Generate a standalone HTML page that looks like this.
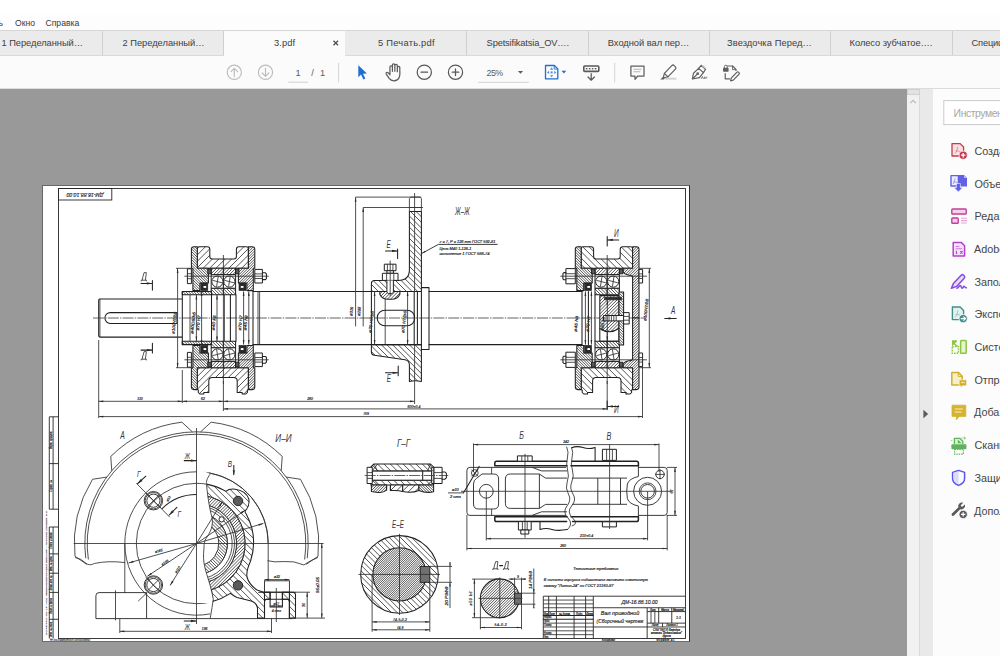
<!DOCTYPE html>
<html lang="ru">
<head>
<meta charset="utf-8">
<title>3.pdf - Adobe Acrobat</title>
<style>
html,body{margin:0;padding:0;}
body{width:1000px;height:656px;overflow:hidden;position:relative;background:#fff;font-family:"Liberation Sans",sans-serif;color:#444;}
.abs{position:absolute;}
#menubar{left:0;top:15px;width:1000px;height:15px;background:#fdfdfd;}
#menubar span{position:absolute;top:1.8px;font-size:8.6px;line-height:12px;color:#3a3a3a;white-space:nowrap;}
#tabbar{left:0;top:30px;width:1000px;height:26px;background:#ebebeb;border-top:1px solid #d6d6d6;border-bottom:1px solid #d9d9d9;box-sizing:border-box;}
.tab{position:absolute;top:0;height:24px;box-sizing:border-box;border-right:1px solid #cfcfcf;font-size:9.3px;line-height:24px;color:#404040;text-align:left;white-space:nowrap;overflow:hidden;}
.tt{position:absolute;top:0;white-space:nowrap;}
.tab.act{background:#fbfbfb;height:25px;border-right:none;}
#toolbar{left:0;top:56px;width:1000px;height:33px;background:#fbfbfb;border-bottom:1px solid #dcdcdc;box-sizing:border-box;}
#docbg{left:0;top:89px;width:907px;height:567px;background:#999999;}
#vscroll{left:907px;top:89px;width:13px;height:567px;background:#f1f1f1;border-right:1px solid #dadada;box-sizing:border-box;}
#split{left:920px;top:89px;width:13px;height:567px;background:#e9e9e9;}
#rpanel{left:933px;top:89px;width:67px;height:567px;background:#fcfcfc;}
.tool{position:absolute;left:41px;font-size:10.6px;line-height:14px;color:#484848;white-space:nowrap;}
#page{left:42px;top:185px;width:648px;height:457px;background:#fff;box-sizing:border-box;border-left:1px solid #666;border-top:1px solid #666;border-right:1px solid #2a2a2a;border-bottom:1px solid #6e6e6e;}
svg{position:absolute;left:0;top:0;overflow:visible;}
</style>
</head>
<body>
<div class="abs" id="menubar">
  <span style="left:-1.5px">ь</span>
  <span style="left:15px">Окно</span>
  <span style="left:45.5px">Справка</span>
</div>
<div class="abs" id="tabbar">
  <div class="tab" style="left:-19.5px;width:122.0px"><span class="tt" style="left:21.0px;letter-spacing:-0.040px">1 Переделанный…</span></div>
  <div class="tab" style="left:102.5px;width:121.5px"><span class="tt" style="left:20.0px;letter-spacing:-0.007px">2 Переделанный…</span></div>
  <div class="tab act" style="left:224px;width:121px"><span class="tt" style="left:50px;letter-spacing:0.1px">3.pdf</span></div>
  <div class="tab" style="left:345px;width:122px"><span class="tt" style="left:33.0px;letter-spacing:0.255px">5 Печать.pdf</span></div>
  <div class="tab" style="left:467px;width:122px"><span class="tt" style="left:19.6px;letter-spacing:-0.153px">Spetsifikatsia_OV….</span></div>
  <div class="tab" style="left:589px;width:121px"><span class="tt" style="left:18.8px;letter-spacing:-0.020px">Входной вал пер…</span></div>
  <div class="tab" style="left:710px;width:121px"><span class="tt" style="left:17.0px;letter-spacing:0.095px">Звездочка Перед…</span></div>
  <div class="tab" style="left:831px;width:122px"><span class="tt" style="left:18.6px;letter-spacing:-0.049px">Колесо зубчатое….</span></div>
  <div class="tab" style="left:953px;width:122px"><span class="tt" style="left:18.6px;letter-spacing:-0.200px">Спецификация…</span></div>
</div>
<div class="abs" id="toolbar"></div>
<div class="abs" id="docbg"></div>
<div class="abs" id="vscroll"></div>
<div class="abs" id="split"></div>
<div class="abs" id="rpanel"></div>
<div class="abs" id="page"></div>
<!--CHROME-START-->
<svg id="chrome" width="1000" height="656" viewBox="0 0 1000 656" font-family="Liberation Sans, sans-serif">
<path id="tabclose" d="M333.5 40.7L338 45.2M338 40.7L333.5 45.2" stroke="#4d4d4d" stroke-width="1.25" fill="none"/>
<!-- toolbar: page nav -->
<g fill="none" stroke="#bdbdbd" stroke-width="1.2" stroke-linecap="round" stroke-linejoin="round">
  <circle cx="234.3" cy="72.3" r="7.1"/>
  <path d="M234.3 76.3V68.6M231 71.6l3.3-3.3 3.3 3.3"/>
  <circle cx="265.5" cy="72.3" r="7.1"/>
  <path d="M265.5 68.3V76M262.2 73l3.3 3.3 3.3-3.3"/>
</g>
<text x="298" y="75.6" font-size="9.2" fill="#5a5a5a" text-anchor="middle">1</text>
<path d="M288.3 82.2H307.8" stroke="#cfcfcf" stroke-width="1"/>
<text x="311.3" y="75.6" font-size="9.2" fill="#5a5a5a">/</text>
<text x="320" y="75.6" font-size="9.2" fill="#5a5a5a">1</text>
<path d="M338.6 62.8V82.3M614.7 62.8V82.3" stroke="#d4d4d4" stroke-width="1"/>
<!-- select arrow -->
<path d="M358.3 65.2L358.3 77.2L361 74.6L363.4 79.4L365.3 78.5L363 73.8L366.9 73.6Z" fill="#1e6fd0"/>
<!-- hand -->
<g fill="none" stroke="#595959" stroke-width="1.1" stroke-linecap="round" stroke-linejoin="round" transform="translate(393.3 72.6) scale(1.12) translate(-392.3 -72.6)">
  <path d="M389.3 73.5V67.6a1.1 1.1 0 0 1 2.2 0V71.5M391.5 71.5V66a1.1 1.1 0 0 1 2.2 0V71.5M393.7 71.5V66.4a1.1 1.1 0 0 1 2.2 0V71.8M395.9 71.8V68.2a1.1 1.1 0 0 1 2.2 0V71.8M398.1 70.5c0 2.5 0.6 4.2-0.6 6.6-0.9 1.9-2.3 2.8-4.6 2.8-2.2 0-3.2-0.6-4.3-2.1l-2.6-3.9c-0.6-1.1 0.7-2 1.7-1.1l1.7 1.7"/>
</g>
<!-- zoom out / in -->
<g fill="none" stroke="#585858" stroke-width="1.25" stroke-linecap="round">
  <circle cx="424.3" cy="72.2" r="7.1"/>
  <path d="M421 72.2H427.6"/>
  <circle cx="455.5" cy="72.2" r="7.1"/>
  <path d="M452.2 72.2H458.8M455.5 68.9V75.5"/>
</g>
<text x="486.6" y="75.5" font-size="8.8" fill="#5a5a5a" letter-spacing="-0.55">25%</text>
<path d="M517.9 70.9H523.1L520.5 73.8Z" fill="#5a5a5a"/>
<path d="M478 82.3H528.8" stroke="#d2d2d2" stroke-width="1"/>
<!-- fit page -->
<g fill="none" stroke="#1e6fd0" stroke-width="1.3" stroke-linejoin="round">
  <path d="M545.5 65.5H554.4L557.8 68.9V78.8H545.5Z"/>
  <path d="M554.2 65.6V69.1H557.7" stroke-width="0.9"/>
</g>
<g fill="#4a8fe0">
  <path d="M551.6 67.6l1.7 2.1h-3.4zM551.6 77.3l1.7-2.1h-3.4zM547 72.4l2.1-1.7v3.4zM556.3 72.4l-2.1-1.7v3.4z"/>
  <rect x="550.6" y="71.4" width="2" height="2"/>
</g>
<path d="M561.5 70.8H566.3L563.9 73.5Z" fill="#1e6fd0"/>
<!-- keyboard/scroll down -->
<g fill="none" stroke="#5a5a5a" stroke-width="1.25" stroke-linecap="round" stroke-linejoin="round">
  <rect x="583.8" y="66" width="15" height="5.4" rx="0.9" stroke-width="1.6"/>
  <path d="M591.2 73.6V80M588 77l3.2 3.2 3.2-3.2"/>
</g>
<g fill="#5a5a5a"><rect x="585.8" y="68" width="1.6" height="1.4"/><rect x="588.8" y="68" width="1.6" height="1.4"/><rect x="591.8" y="68" width="1.6" height="1.4"/><rect x="594.8" y="68" width="1.6" height="1.4"/></g>
<!-- comment -->
<g fill="none" stroke="#5f5f5f" stroke-width="1.25" stroke-linejoin="round">
  <path d="M630.9 66H644V76H637.8L635 79.3V76H630.9Z"/>
</g>
<path d="M633.4 69.3H641.6M633.4 71.8H640.4" stroke="#b5b5b5" stroke-width="1.1"/>
<!-- highlighter -->
<g fill="none" stroke="#5f5f5f" stroke-width="1.2" stroke-linejoin="round" stroke-linecap="round">
  <path d="M664.4 73.4L671.8 65.6a1.7 1.7 0 0 1 2.4 0l1.2 1.2a1.7 1.7 0 0 1 0 2.4L667.9 76.9Z"/>
  <path d="M664.4 73.4L663.2 78L667.9 76.9"/>
</g>
<path d="M660.2 79.4l3-2.6 1.6 1.6-1.2 1z" fill="#5f5f5f"/>
<path d="M665 78.7H676.4" stroke="#d0d0d0" stroke-width="1.8"/>
<!-- sign pen -->
<g fill="none" stroke="#5f5f5f" stroke-width="1.2" stroke-linejoin="round" stroke-linecap="round">
  <path d="M692.3 79L693.5 73.2L698.6 68.4L703.4 72.6L699.4 77.6Z"/>
  <path d="M692.6 78.7L697.3 74.1"/>
  <path d="M698.6 68.4L701.2 65.3L705.5 69.2L703.4 72.6"/>
  <circle cx="697.7" cy="73.7" r="0.8"/>
</g>
<path d="M701.4 65.5l2 -0.2 2.2 2.2-0.2 1.6z" fill="#cfcfcf"/>
<path d="M701.2 78.9l1.2-2.4 1.1 2.4M704.6 78.9v-2.3M705.8 78.9v-1.6l1.5 0" fill="none" stroke="#5f5f5f" stroke-width="0.8"/>
<!-- doc + pen -->
<g fill="none" stroke="#5f5f5f" stroke-width="1.2" stroke-linejoin="round" stroke-linecap="round">
  <path d="M727.5 66H732.6L736 69.4V70.5M725.2 73.5V78.8H729.6"/>
  <path d="M732.5 66.2V69.6H735.8" stroke-width="0.9"/>
  <path d="M731.2 78.2L737 72.2a1 1 0 0 1 1.5 0l0.6 0.6a1 1 0 0 1 0 1.4L733.3 80.2L730.6 80.8Z"/>
</g>
<rect x="723" y="67.8" width="5.6" height="4" rx="0.8" fill="#5f5f5f"/>
<path d="M724.4 68V66.6a1.4 1.4 0 0 1 2.8 0V68" fill="none" stroke="#5f5f5f" stroke-width="0.9"/>

<!-- scrollbar pieces -->
<rect x="907.5" y="89.5" width="12" height="5" fill="#e2e2e2" stroke="#cfcfcf" stroke-width="1"/>
<path d="M910.3 103.2L913.1 100.4L915.9 103.2" fill="none" stroke="#b9b9b9" stroke-width="1.2"/>
<path d="M923.4 409.8V418.2L928.2 414Z" fill="#5c5c5c"/>
<!-- search -->
<rect x="943.8" y="100.6" width="70" height="24" fill="#fff" stroke="#cbcbcb" stroke-width="1"/>
<text x="953.6" y="117" font-size="10.4" fill="#a6a6a6" letter-spacing="-0.42">Инструмент</text>
<g font-size="10.8" fill="#464646">
  <text x="974.4" y="154.8">Создать</text>
  <text x="974.4" y="187.5">Объединить</text>
  <text x="974.6" y="220.2">Редактиро</text>
  <text x="974" y="252.9">Adobe Sign</text>
  <text x="974.4" y="285.6">Заполнить</text>
  <text x="974.6" y="318.3">Экспорт</text>
  <text x="974.4" y="351">Системати</text>
  <text x="974.4" y="383.7">Отправить</text>
  <text x="974" y="416.4">Добавить</text>
  <text x="974.4" y="449.1">Сканирова</text>
  <text x="974.4" y="481.8">Защита</text>
  <text x="974" y="514.5">Дополнит</text>
</g>
<!-- 1 create pdf -->
<g>
  <path d="M952 143.6H960.2L963.6 147V156H952Z" fill="#f7dfe2" stroke="#c8394c" stroke-width="1.3" stroke-linejoin="round"/>
  <path d="M955 153.2c1.6-1.4 2.4-3.4 2.6-6.4M955.6 150.8c1.8-0.2 3.6 0.4 5.2 1.6" fill="none" stroke="#d9808c" stroke-width="0.8"/>
  <circle cx="963.2" cy="155.2" r="4.1" fill="#c8394c" stroke="#fcfcfc" stroke-width="0.8"/>
  <path d="M961 155.2H965.4M963.2 153V157.4" stroke="#fff" stroke-width="1.3"/>
</g>
<!-- 2 combine -->
<g>
  <path d="M958.5 175H964L967 178V186.5H958.5Z" fill="#6161e6"/>
  <path d="M964 175V178H967Z" fill="#b9b9f5"/>
  <path d="M951 175.6H958.4V186H951Z" fill="#eeeefc" stroke="#6161e6" stroke-width="1.4" stroke-linejoin="round"/>
  <path d="M953 184c1.2-1.2 1.8-3 2-5.6M953.4 181.8c1.4-0.2 2.8 0.3 4 1.3" fill="none" stroke="#8a8aea" stroke-width="0.8"/>
  <path d="M956.4 183.5H960.4V187.5H962.8L958.4 192L954 187.5H956.4Z" fill="#6161e6" stroke="#fcfcfc" stroke-width="0.6"/>
</g>
<!-- 3 edit pdf -->
<g>
  <rect x="951.8" y="209" width="14.4" height="5" rx="0.8" fill="#f3d3ea" stroke="#c43e99" stroke-width="1.4"/>
  <rect x="951.8" y="218" width="6.4" height="5.2" rx="0.8" fill="#f3d3ea" stroke="#c43e99" stroke-width="1.4"/>
  <path d="M961 218.2H966.8M961 220.6H966.8M961 223H966.8" stroke="#e3a2d0" stroke-width="1.1"/>
</g>
<!-- 4 adobe sign -->
<g>
  <path d="M953.2 242.4H961.2L964.6 245.8V256H953.2Z" fill="#f5e3fa" stroke="#b341cf" stroke-width="1.5" stroke-linejoin="round"/>
  <path d="M955.6 246.4H959.4M955.6 248.8H962.2" stroke="#c77adb" stroke-width="1"/>
  <path d="M956.4 250.8v2.4l0.6 0.8M960.2 251l2.4 2.6M962.6 251l-2.4 2.6" fill="none" stroke="#b341cf" stroke-width="1.1"/>
</g>
<!-- 5 fill sign -->
<g fill="none" stroke="#864be0" stroke-width="1.5" stroke-linejoin="round" stroke-linecap="round">
  <path d="M951.4 288.2L953.4 283.6L961.2 275.2a1.7 1.7 0 0 1 2.4 0l0.6 0.6a1.7 1.7 0 0 1 0 2.4L956.6 286.4L951.4 288.2Z" fill="#e6dcf8"/>
  <path d="M956.8 288.2c1.6 0 2.6-2.8 3.6-2.8s0.4 2.8 1.6 2.8 1.2-2 2-2 0.8 1.8 2.4 1.6"/>
</g>
<!-- 6 export pdf -->
<g>
  <path d="M952.4 307H960.2L963.6 310.4V319.6H952.4Z" fill="#e4f0ef" stroke="#428f89" stroke-width="1.4" stroke-linejoin="round"/>
  <path d="M955.2 316.8c1.6-1.4 2.4-3.4 2.6-6.4M955.8 314.4c1.8-0.2 3.6 0.4 5.2 1.6" fill="none" stroke="#88bcb8" stroke-width="0.8"/>
  <circle cx="963.2" cy="318.6" r="4.2" fill="#428f89" stroke="#fcfcfc" stroke-width="0.8"/>
  <path d="M960.8 318.6H964.6M963.4 316.6L965.6 318.6L963.4 320.6" fill="none" stroke="#fff" stroke-width="1.2"/>
</g>
<!-- 7 organize -->
<g>
  <rect x="960.6" y="340.4" width="5.6" height="12.8" rx="0.8" fill="#e6f3d4" stroke="#8cc540" stroke-width="1.5"/>
  <rect x="952.2" y="346.6" width="6.2" height="6.6" fill="none" stroke="#8cc540" stroke-width="1.4" stroke-dasharray="1.6 1"/>
  <path d="M952 340.2H957V341.6L954.8 343.4L958.2 346L957 347L954 344.4L952 346Z" fill="#8cc540"/>
</g>
<!-- 8 send for review -->
<g>
  <path d="M951.8 372.4H958.4L962.2 376.2V385H951.8Z" fill="#f6eec6" stroke="#d1b12c" stroke-width="1.5" stroke-linejoin="round"/>
  <path d="M958.2 372.6V376.4H962" fill="none" stroke="#d1b12c" stroke-width="1"/>
  <path d="M959.2 379.8H966.6V385.8H962.4L960.6 387.8V385.8H959.2Z" fill="#d1b12c" stroke="#fcfcfc" stroke-width="0.6"/>
  <path d="M961 382.6H964.8" stroke="#f6eec6" stroke-width="1"/>
</g>
<!-- 9 comment -->
<g>
  <path d="M952 405.2H965.8V416.4H959.2L956.4 419.8V416.4H952Z" fill="#d3b331" stroke="#d3b331" stroke-width="0.8" stroke-linejoin="round"/>
  <path d="M954.8 409H962.8M954.8 412H961.6" stroke="#f8efc4" stroke-width="1.2"/>
</g>
<!-- 10 scan -->
<g>
  <path d="M954.4 444V438.4H960L962.8 441.2V444" fill="#dff0dd" stroke="#5fb45b" stroke-width="1.3" stroke-linejoin="round"/>
  <path d="M957.8 439.4V443.2H961.6Z" fill="#5fb45b"/>
  <rect x="951.4" y="444.2" width="15" height="5" rx="1" fill="#5fb45b"/>
  <rect x="954.6" y="449.4" width="8.8" height="4.8" fill="none" stroke="#5fb45b" stroke-width="1.2" stroke-dasharray="1.4 1"/>
  <path d="M964.6 436.6v3M963.1 438.1h3M962 437.2v1.4" stroke="#7cc878" stroke-width="0.8"/>
  <path d="M950.8 440.4h1.6" stroke="#7cc878" stroke-width="0.8"/>
</g>
<!-- 11 protect -->
<g>
  <path d="M958.6 470.4L964.6 472.4V478.4C964.6 481.6 962 484 958.6 485.4C955.2 484 952.6 481.6 952.6 478.4V472.4Z" fill="#fcfcfc" stroke="#5656ee" stroke-width="1.5" stroke-linejoin="round"/>
  <path d="M958.6 471.4L953.6 473.1V478.4C953.6 481 955.8 483 958.6 484.3Z" fill="#dcdcfa"/>
</g>
<!-- 12 more tools -->
<g>
  <path d="M952 513.6L958.4 507.2a3.6 3.6 0 0 1 4.8-4.4L960.6 505.4L962 507L964.8 504.6a3.6 3.6 0 0 1-4.6 4.6L954 515.6a1.4 1.4 0 0 1-2-2Z" fill="#5a5a5a"/>
  <circle cx="963.2" cy="514.4" r="4.2" fill="#5a5a5a" stroke="#fcfcfc" stroke-width="0.8"/>
  <path d="M961 514.4H965.4M963.2 512.2V516.6" stroke="#fff" stroke-width="1.3"/>
</g>

</svg>

<!--CHROME-END-->
<!--DRAW-START-->
<svg id="drawing" width="1000" height="656" viewBox="0 0 1000 656" font-family="Liberation Sans, sans-serif">
<defs><path id="L1" d="M-401 642l456 -456M-394.6 642l456 -456M-388.2 642l456 -456M-381.8 642l456 -456M-375.4 642l456 -456M-369 642l456 -456M-362.6 642l456 -456M-356.2 642l456 -456M-349.8 642l456 -456M-343.4 642l456 -456M-337 642l456 -456M-330.6 642l456 -456M-324.2 642l456 -456M-317.8 642l456 -456M-311.4 642l456 -456M-305 642l456 -456M-298.6 642l456 -456M-292.2 642l456 -456M-285.8 642l456 -456M-279.4 642l456 -456M-273 642l456 -456M-266.6 642l456 -456M-260.2 642l456 -456M-253.8 642l456 -456M-247.4 642l456 -456M-241 642l456 -456M-234.6 642l456 -456M-228.2 642l456 -456M-221.8 642l456 -456M-215.4 642l456 -456M-209 642l456 -456M-202.6 642l456 -456M-196.2 642l456 -456M-189.8 642l456 -456M-183.4 642l456 -456M-177 642l456 -456M-170.6 642l456 -456M-164.2 642l456 -456M-157.8 642l456 -456M-151.4 642l456 -456M-145 642l456 -456M-138.6 642l456 -456M-132.2 642l456 -456M-125.8 642l456 -456M-119.4 642l456 -456M-113 642l456 -456M-106.6 642l456 -456M-100.2 642l456 -456M-93.8 642l456 -456M-87.4 642l456 -456M-81 642l456 -456M-74.6 642l456 -456M-68.2 642l456 -456M-61.8 642l456 -456M-55.4 642l456 -456M-49 642l456 -456M-42.6 642l456 -456M-36.2 642l456 -456M-29.8 642l456 -456M-23.4 642l456 -456M-17 642l456 -456M-10.6 642l456 -456M-4.2 642l456 -456M2.2 642l456 -456M8.6 642l456 -456M15 642l456 -456M21.4 642l456 -456M27.8 642l456 -456M34.2 642l456 -456M40.6 642l456 -456M47 642l456 -456M53.4 642l456 -456M59.8 642l456 -456M66.2 642l456 -456M72.6 642l456 -456M79 642l456 -456M85.4 642l456 -456M91.8 642l456 -456M98.2 642l456 -456M104.6 642l456 -456M111 642l456 -456M117.4 642l456 -456M123.8 642l456 -456M130.2 642l456 -456M136.6 642l456 -456M143 642l456 -456M149.4 642l456 -456M155.8 642l456 -456M162.2 642l456 -456M168.6 642l456 -456M175 642l456 -456M181.4 642l456 -456M187.8 642l456 -456M194.2 642l456 -456M200.6 642l456 -456M207 642l456 -456M213.4 642l456 -456M219.8 642l456 -456M226.2 642l456 -456M232.6 642l456 -456M239 642l456 -456M245.4 642l456 -456M251.8 642l456 -456M258.2 642l456 -456M264.6 642l456 -456M271 642l456 -456M277.4 642l456 -456M283.8 642l456 -456M290.2 642l456 -456M296.6 642l456 -456M303 642l456 -456M309.4 642l456 -456M315.8 642l456 -456M322.2 642l456 -456M328.6 642l456 -456M335 642l456 -456M341.4 642l456 -456M347.8 642l456 -456M354.2 642l456 -456M360.6 642l456 -456M367 642l456 -456M373.4 642l456 -456M379.8 642l456 -456M386.2 642l456 -456M392.6 642l456 -456M399 642l456 -456M405.4 642l456 -456M411.8 642l456 -456M418.2 642l456 -456M424.6 642l456 -456M431 642l456 -456M437.4 642l456 -456M443.8 642l456 -456M450.2 642l456 -456M456.6 642l456 -456M463 642l456 -456M469.4 642l456 -456M475.8 642l456 -456M482.2 642l456 -456M488.6 642l456 -456M495 642l456 -456M501.4 642l456 -456M507.8 642l456 -456M514.2 642l456 -456M520.6 642l456 -456M527 642l456 -456M533.4 642l456 -456M539.8 642l456 -456M546.2 642l456 -456M552.6 642l456 -456M559 642l456 -456M565.4 642l456 -456M571.8 642l456 -456M578.2 642l456 -456M584.6 642l456 -456M591 642l456 -456M597.4 642l456 -456M603.8 642l456 -456M610.2 642l456 -456M616.6 642l456 -456M623 642l456 -456M629.4 642l456 -456M635.8 642l456 -456M642.2 642l456 -456M648.6 642l456 -456M655 642l456 -456M661.4 642l456 -456M667.8 642l456 -456M674.2 642l456 -456M680.6 642l456 -456M687 642l456 -456M693.4 642l456 -456M699.8 642l456 -456M706.2 642l456 -456M712.6 642l456 -456M719 642l456 -456M725.4 642l456 -456M731.8 642l456 -456M738.2 642l456 -456M744.6 642l456 -456M751 642l456 -456M757.4 642l456 -456M763.8 642l456 -456M770.2 642l456 -456M776.6 642l456 -456M783 642l456 -456M789.4 642l456 -456M795.8 642l456 -456M802.2 642l456 -456M808.6 642l456 -456M815 642l456 -456M821.4 642l456 -456M827.8 642l456 -456M834.2 642l456 -456M840.6 642l456 -456M847 642l456 -456M853.4 642l456 -456M859.8 642l456 -456M866.2 642l456 -456M872.6 642l456 -456M879 642l456 -456M885.4 642l456 -456M891.8 642l456 -456M898.2 642l456 -456M904.6 642l456 -456M911 642l456 -456M917.4 642l456 -456M923.8 642l456 -456M930.2 642l456 -456M936.6 642l456 -456M943 642l456 -456M949.4 642l456 -456M955.8 642l456 -456M962.2 642l456 -456M968.6 642l456 -456M975 642l456 -456M981.4 642l456 -456M987.8 642l456 -456M994.2 642l456 -456M1000.6 642l456 -456M1007 642l456 -456M1013.4 642l456 -456M1019.8 642l456 -456M1026.2 642l456 -456M1032.6 642l456 -456M1039 642l456 -456M1045.4 642l456 -456M1051.8 642l456 -456M1058.2 642l456 -456M1064.6 642l456 -456M1071 642l456 -456M1077.4 642l456 -456M1083.8 642l456 -456M1090.2 642l456 -456M1096.6 642l456 -456M1103 642l456 -456M1109.4 642l456 -456M1115.8 642l456 -456M1122.2 642l456 -456M1128.6 642l456 -456M1135 642l456 -456M1141.4 642l456 -456" fill="none" stroke="#2a2a2a" stroke-width="0.8"/>
<path id="L2" d="M-399.7 186l456 456M-393.3 186l456 456M-386.9 186l456 456M-380.5 186l456 456M-374.1 186l456 456M-367.7 186l456 456M-361.3 186l456 456M-354.9 186l456 456M-348.5 186l456 456M-342.1 186l456 456M-335.7 186l456 456M-329.3 186l456 456M-322.9 186l456 456M-316.5 186l456 456M-310.1 186l456 456M-303.7 186l456 456M-297.3 186l456 456M-290.9 186l456 456M-284.5 186l456 456M-278.1 186l456 456M-271.7 186l456 456M-265.3 186l456 456M-258.9 186l456 456M-252.5 186l456 456M-246.1 186l456 456M-239.7 186l456 456M-233.3 186l456 456M-226.9 186l456 456M-220.5 186l456 456M-214.1 186l456 456M-207.7 186l456 456M-201.3 186l456 456M-194.9 186l456 456M-188.5 186l456 456M-182.1 186l456 456M-175.7 186l456 456M-169.3 186l456 456M-162.9 186l456 456M-156.5 186l456 456M-150.1 186l456 456M-143.7 186l456 456M-137.3 186l456 456M-130.9 186l456 456M-124.5 186l456 456M-118.1 186l456 456M-111.7 186l456 456M-105.3 186l456 456M-98.9 186l456 456M-92.5 186l456 456M-86.1 186l456 456M-79.7 186l456 456M-73.3 186l456 456M-66.9 186l456 456M-60.5 186l456 456M-54.1 186l456 456M-47.7 186l456 456M-41.3 186l456 456M-34.9 186l456 456M-28.5 186l456 456M-22.1 186l456 456M-15.7 186l456 456M-9.3 186l456 456M-2.9 186l456 456M3.5 186l456 456M9.9 186l456 456M16.3 186l456 456M22.7 186l456 456M29.1 186l456 456M35.5 186l456 456M41.9 186l456 456M48.3 186l456 456M54.7 186l456 456M61.1 186l456 456M67.5 186l456 456M73.9 186l456 456M80.3 186l456 456M86.7 186l456 456M93.1 186l456 456M99.5 186l456 456M105.9 186l456 456M112.3 186l456 456M118.7 186l456 456M125.1 186l456 456M131.5 186l456 456M137.9 186l456 456M144.3 186l456 456M150.7 186l456 456M157.1 186l456 456M163.5 186l456 456M169.9 186l456 456M176.3 186l456 456M182.7 186l456 456M189.1 186l456 456M195.5 186l456 456M201.9 186l456 456M208.3 186l456 456M214.7 186l456 456M221.1 186l456 456M227.5 186l456 456M233.9 186l456 456M240.3 186l456 456M246.7 186l456 456M253.1 186l456 456M259.5 186l456 456M265.9 186l456 456M272.3 186l456 456M278.7 186l456 456M285.1 186l456 456M291.5 186l456 456M297.9 186l456 456M304.3 186l456 456M310.7 186l456 456M317.1 186l456 456M323.5 186l456 456M329.9 186l456 456M336.3 186l456 456M342.7 186l456 456M349.1 186l456 456M355.5 186l456 456M361.9 186l456 456M368.3 186l456 456M374.7 186l456 456M381.1 186l456 456M387.5 186l456 456M393.9 186l456 456M400.3 186l456 456M406.7 186l456 456M413.1 186l456 456M419.5 186l456 456M425.9 186l456 456M432.3 186l456 456M438.7 186l456 456M445.1 186l456 456M451.5 186l456 456M457.9 186l456 456M464.3 186l456 456M470.7 186l456 456M477.1 186l456 456M483.5 186l456 456M489.9 186l456 456M496.3 186l456 456M502.7 186l456 456M509.1 186l456 456M515.5 186l456 456M521.9 186l456 456M528.3 186l456 456M534.7 186l456 456M541.1 186l456 456M547.5 186l456 456M553.9 186l456 456M560.3 186l456 456M566.7 186l456 456M573.1 186l456 456M579.5 186l456 456M585.9 186l456 456M592.3 186l456 456M598.7 186l456 456M605.1 186l456 456M611.5 186l456 456M617.9 186l456 456M624.3 186l456 456M630.7 186l456 456M637.1 186l456 456M643.5 186l456 456M649.9 186l456 456M656.3 186l456 456M662.7 186l456 456M669.1 186l456 456M675.5 186l456 456M681.9 186l456 456M688.3 186l456 456M694.7 186l456 456M701.1 186l456 456M707.5 186l456 456M713.9 186l456 456M720.3 186l456 456M726.7 186l456 456M733.1 186l456 456M739.5 186l456 456M745.9 186l456 456M752.3 186l456 456M758.7 186l456 456M765.1 186l456 456M771.5 186l456 456M777.9 186l456 456M784.3 186l456 456M790.7 186l456 456M797.1 186l456 456M803.5 186l456 456M809.9 186l456 456M816.3 186l456 456M822.7 186l456 456M829.1 186l456 456M835.5 186l456 456M841.9 186l456 456M848.3 186l456 456M854.7 186l456 456M861.1 186l456 456M867.5 186l456 456M873.9 186l456 456M880.3 186l456 456M886.7 186l456 456M893.1 186l456 456M899.5 186l456 456M905.9 186l456 456M912.3 186l456 456M918.7 186l456 456M925.1 186l456 456M931.5 186l456 456M937.9 186l456 456M944.3 186l456 456M950.7 186l456 456M957.1 186l456 456M963.5 186l456 456M969.9 186l456 456M976.3 186l456 456M982.7 186l456 456M989.1 186l456 456M995.5 186l456 456M1001.9 186l456 456M1008.3 186l456 456M1014.7 186l456 456M1021.1 186l456 456M1027.5 186l456 456M1033.9 186l456 456M1040.3 186l456 456M1046.7 186l456 456M1053.1 186l456 456M1059.5 186l456 456M1065.9 186l456 456M1072.3 186l456 456M1078.7 186l456 456M1085.1 186l456 456M1091.5 186l456 456M1097.9 186l456 456M1104.3 186l456 456M1110.7 186l456 456M1117.1 186l456 456M1123.5 186l456 456M1129.9 186l456 456M1136.3 186l456 456M1142.7 186l456 456" fill="none" stroke="#2a2a2a" stroke-width="0.8"/>
<path id="L1f" d="M-401 642l456 -456M-398.3 642l456 -456M-395.6 642l456 -456M-392.9 642l456 -456M-390.2 642l456 -456M-387.5 642l456 -456M-384.8 642l456 -456M-382.1 642l456 -456M-379.4 642l456 -456M-376.7 642l456 -456M-374 642l456 -456M-371.3 642l456 -456M-368.6 642l456 -456M-365.9 642l456 -456M-363.2 642l456 -456M-360.5 642l456 -456M-357.8 642l456 -456M-355.1 642l456 -456M-352.4 642l456 -456M-349.7 642l456 -456M-347 642l456 -456M-344.3 642l456 -456M-341.6 642l456 -456M-338.9 642l456 -456M-336.2 642l456 -456M-333.5 642l456 -456M-330.8 642l456 -456M-328.1 642l456 -456M-325.4 642l456 -456M-322.7 642l456 -456M-320 642l456 -456M-317.3 642l456 -456M-314.6 642l456 -456M-311.9 642l456 -456M-309.2 642l456 -456M-306.5 642l456 -456M-303.8 642l456 -456M-301.1 642l456 -456M-298.4 642l456 -456M-295.7 642l456 -456M-293 642l456 -456M-290.3 642l456 -456M-287.6 642l456 -456M-284.9 642l456 -456M-282.2 642l456 -456M-279.5 642l456 -456M-276.8 642l456 -456M-274.1 642l456 -456M-271.4 642l456 -456M-268.7 642l456 -456M-266 642l456 -456M-263.3 642l456 -456M-260.6 642l456 -456M-257.9 642l456 -456M-255.2 642l456 -456M-252.5 642l456 -456M-249.8 642l456 -456M-247.1 642l456 -456M-244.4 642l456 -456M-241.7 642l456 -456M-239 642l456 -456M-236.3 642l456 -456M-233.6 642l456 -456M-230.9 642l456 -456M-228.2 642l456 -456M-225.5 642l456 -456M-222.8 642l456 -456M-220.1 642l456 -456M-217.4 642l456 -456M-214.7 642l456 -456M-212 642l456 -456M-209.3 642l456 -456M-206.6 642l456 -456M-203.9 642l456 -456M-201.2 642l456 -456M-198.5 642l456 -456M-195.8 642l456 -456M-193.1 642l456 -456M-190.4 642l456 -456M-187.7 642l456 -456M-185 642l456 -456M-182.3 642l456 -456M-179.6 642l456 -456M-176.9 642l456 -456M-174.2 642l456 -456M-171.5 642l456 -456M-168.8 642l456 -456M-166.1 642l456 -456M-163.4 642l456 -456M-160.7 642l456 -456M-158 642l456 -456M-155.3 642l456 -456M-152.6 642l456 -456M-149.9 642l456 -456M-147.2 642l456 -456M-144.5 642l456 -456M-141.8 642l456 -456M-139.1 642l456 -456M-136.4 642l456 -456M-133.7 642l456 -456M-131 642l456 -456M-128.3 642l456 -456M-125.6 642l456 -456M-122.9 642l456 -456M-120.2 642l456 -456M-117.5 642l456 -456M-114.8 642l456 -456M-112.1 642l456 -456M-109.4 642l456 -456M-106.7 642l456 -456M-104 642l456 -456M-101.3 642l456 -456M-98.6 642l456 -456M-95.9 642l456 -456M-93.2 642l456 -456M-90.5 642l456 -456M-87.8 642l456 -456M-85.1 642l456 -456M-82.4 642l456 -456M-79.7 642l456 -456M-77 642l456 -456M-74.3 642l456 -456M-71.6 642l456 -456M-68.9 642l456 -456M-66.2 642l456 -456M-63.5 642l456 -456M-60.8 642l456 -456M-58.1 642l456 -456M-55.4 642l456 -456M-52.7 642l456 -456M-50 642l456 -456M-47.3 642l456 -456M-44.6 642l456 -456M-41.9 642l456 -456M-39.2 642l456 -456M-36.5 642l456 -456M-33.8 642l456 -456M-31.1 642l456 -456M-28.4 642l456 -456M-25.7 642l456 -456M-23 642l456 -456M-20.3 642l456 -456M-17.6 642l456 -456M-14.9 642l456 -456M-12.2 642l456 -456M-9.5 642l456 -456M-6.8 642l456 -456M-4.1 642l456 -456M-1.4 642l456 -456M1.3 642l456 -456M4 642l456 -456M6.7 642l456 -456M9.4 642l456 -456M12.1 642l456 -456M14.8 642l456 -456M17.5 642l456 -456M20.2 642l456 -456M22.9 642l456 -456M25.6 642l456 -456M28.3 642l456 -456M31 642l456 -456M33.7 642l456 -456M36.4 642l456 -456M39.1 642l456 -456M41.8 642l456 -456M44.5 642l456 -456M47.2 642l456 -456M49.9 642l456 -456M52.6 642l456 -456M55.3 642l456 -456M58 642l456 -456M60.7 642l456 -456M63.4 642l456 -456M66.1 642l456 -456M68.8 642l456 -456M71.5 642l456 -456M74.2 642l456 -456M76.9 642l456 -456M79.6 642l456 -456M82.3 642l456 -456M85 642l456 -456M87.7 642l456 -456M90.4 642l456 -456M93.1 642l456 -456M95.8 642l456 -456M98.5 642l456 -456M101.2 642l456 -456M103.9 642l456 -456M106.6 642l456 -456M109.3 642l456 -456M112 642l456 -456M114.7 642l456 -456M117.4 642l456 -456M120.1 642l456 -456M122.8 642l456 -456M125.5 642l456 -456M128.2 642l456 -456M130.9 642l456 -456M133.6 642l456 -456M136.3 642l456 -456M139 642l456 -456M141.7 642l456 -456M144.4 642l456 -456M147.1 642l456 -456M149.8 642l456 -456M152.5 642l456 -456M155.2 642l456 -456M157.9 642l456 -456M160.6 642l456 -456M163.3 642l456 -456M166 642l456 -456M168.7 642l456 -456M171.4 642l456 -456M174.1 642l456 -456M176.8 642l456 -456M179.5 642l456 -456M182.2 642l456 -456M184.9 642l456 -456M187.6 642l456 -456M190.3 642l456 -456M193 642l456 -456M195.7 642l456 -456M198.4 642l456 -456M201.1 642l456 -456M203.8 642l456 -456M206.5 642l456 -456M209.2 642l456 -456M211.9 642l456 -456M214.6 642l456 -456M217.3 642l456 -456M220 642l456 -456M222.7 642l456 -456M225.4 642l456 -456M228.1 642l456 -456M230.8 642l456 -456M233.5 642l456 -456M236.2 642l456 -456M238.9 642l456 -456M241.6 642l456 -456M244.3 642l456 -456M247 642l456 -456M249.7 642l456 -456M252.4 642l456 -456M255.1 642l456 -456M257.8 642l456 -456M260.5 642l456 -456M263.2 642l456 -456M265.9 642l456 -456M268.6 642l456 -456M271.3 642l456 -456M274 642l456 -456M276.7 642l456 -456M279.4 642l456 -456M282.1 642l456 -456M284.8 642l456 -456M287.5 642l456 -456M290.2 642l456 -456M292.9 642l456 -456M295.6 642l456 -456M298.3 642l456 -456M301 642l456 -456M303.7 642l456 -456M306.4 642l456 -456M309.1 642l456 -456M311.8 642l456 -456M314.5 642l456 -456M317.2 642l456 -456M319.9 642l456 -456M322.6 642l456 -456M325.3 642l456 -456M328 642l456 -456M330.7 642l456 -456M333.4 642l456 -456M336.1 642l456 -456M338.8 642l456 -456M341.5 642l456 -456M344.2 642l456 -456M346.9 642l456 -456M349.6 642l456 -456M352.3 642l456 -456M355 642l456 -456M357.7 642l456 -456M360.4 642l456 -456M363.1 642l456 -456M365.8 642l456 -456M368.5 642l456 -456M371.2 642l456 -456M373.9 642l456 -456M376.6 642l456 -456M379.3 642l456 -456M382 642l456 -456M384.7 642l456 -456M387.4 642l456 -456M390.1 642l456 -456M392.8 642l456 -456M395.5 642l456 -456M398.2 642l456 -456M400.9 642l456 -456M403.6 642l456 -456M406.3 642l456 -456M409 642l456 -456M411.7 642l456 -456M414.4 642l456 -456M417.1 642l456 -456M419.8 642l456 -456M422.5 642l456 -456M425.2 642l456 -456M427.9 642l456 -456M430.6 642l456 -456M433.3 642l456 -456M436 642l456 -456M438.7 642l456 -456M441.4 642l456 -456M444.1 642l456 -456M446.8 642l456 -456M449.5 642l456 -456M452.2 642l456 -456M454.9 642l456 -456M457.6 642l456 -456M460.3 642l456 -456M463 642l456 -456M465.7 642l456 -456M468.4 642l456 -456M471.1 642l456 -456M473.8 642l456 -456M476.5 642l456 -456M479.2 642l456 -456M481.9 642l456 -456M484.6 642l456 -456M487.3 642l456 -456M490 642l456 -456M492.7 642l456 -456M495.4 642l456 -456M498.1 642l456 -456M500.8 642l456 -456M503.5 642l456 -456M506.2 642l456 -456M508.9 642l456 -456M511.6 642l456 -456M514.3 642l456 -456M517 642l456 -456M519.7 642l456 -456M522.4 642l456 -456M525.1 642l456 -456M527.8 642l456 -456M530.5 642l456 -456M533.2 642l456 -456M535.9 642l456 -456M538.6 642l456 -456M541.3 642l456 -456M544 642l456 -456M546.7 642l456 -456M549.4 642l456 -456M552.1 642l456 -456M554.8 642l456 -456M557.5 642l456 -456M560.2 642l456 -456M562.9 642l456 -456M565.6 642l456 -456M568.3 642l456 -456M571 642l456 -456M573.7 642l456 -456M576.4 642l456 -456M579.1 642l456 -456M581.8 642l456 -456M584.5 642l456 -456M587.2 642l456 -456M589.9 642l456 -456M592.6 642l456 -456M595.3 642l456 -456M598 642l456 -456M600.7 642l456 -456M603.4 642l456 -456M606.1 642l456 -456M608.8 642l456 -456M611.5 642l456 -456M614.2 642l456 -456M616.9 642l456 -456M619.6 642l456 -456M622.3 642l456 -456M625 642l456 -456M627.7 642l456 -456M630.4 642l456 -456M633.1 642l456 -456M635.8 642l456 -456M638.5 642l456 -456M641.2 642l456 -456M643.9 642l456 -456M646.6 642l456 -456M649.3 642l456 -456M652 642l456 -456M654.7 642l456 -456M657.4 642l456 -456M660.1 642l456 -456M662.8 642l456 -456M665.5 642l456 -456M668.2 642l456 -456M670.9 642l456 -456M673.6 642l456 -456M676.3 642l456 -456M679 642l456 -456M681.7 642l456 -456M684.4 642l456 -456M687.1 642l456 -456M689.8 642l456 -456M692.5 642l456 -456M695.2 642l456 -456M697.9 642l456 -456M700.6 642l456 -456M703.3 642l456 -456M706 642l456 -456M708.7 642l456 -456M711.4 642l456 -456M714.1 642l456 -456M716.8 642l456 -456M719.5 642l456 -456M722.2 642l456 -456M724.9 642l456 -456M727.6 642l456 -456M730.3 642l456 -456M733 642l456 -456M735.7 642l456 -456M738.4 642l456 -456M741.1 642l456 -456M743.8 642l456 -456M746.5 642l456 -456M749.2 642l456 -456M751.9 642l456 -456M754.6 642l456 -456M757.3 642l456 -456M760 642l456 -456M762.7 642l456 -456M765.4 642l456 -456M768.1 642l456 -456M770.8 642l456 -456M773.5 642l456 -456M776.2 642l456 -456M778.9 642l456 -456M781.6 642l456 -456M784.3 642l456 -456M787 642l456 -456M789.7 642l456 -456M792.4 642l456 -456M795.1 642l456 -456M797.8 642l456 -456M800.5 642l456 -456M803.2 642l456 -456M805.9 642l456 -456M808.6 642l456 -456M811.3 642l456 -456M814 642l456 -456M816.7 642l456 -456M819.4 642l456 -456M822.1 642l456 -456M824.8 642l456 -456M827.5 642l456 -456M830.2 642l456 -456M832.9 642l456 -456M835.6 642l456 -456M838.3 642l456 -456M841 642l456 -456M843.7 642l456 -456M846.4 642l456 -456M849.1 642l456 -456M851.8 642l456 -456M854.5 642l456 -456M857.2 642l456 -456M859.9 642l456 -456M862.6 642l456 -456M865.3 642l456 -456M868 642l456 -456M870.7 642l456 -456M873.4 642l456 -456M876.1 642l456 -456M878.8 642l456 -456M881.5 642l456 -456M884.2 642l456 -456M886.9 642l456 -456M889.6 642l456 -456M892.3 642l456 -456M895 642l456 -456M897.7 642l456 -456M900.4 642l456 -456M903.1 642l456 -456M905.8 642l456 -456M908.5 642l456 -456M911.2 642l456 -456M913.9 642l456 -456M916.6 642l456 -456M919.3 642l456 -456M922 642l456 -456M924.7 642l456 -456M927.4 642l456 -456M930.1 642l456 -456M932.8 642l456 -456M935.5 642l456 -456M938.2 642l456 -456M940.9 642l456 -456M943.6 642l456 -456M946.3 642l456 -456M949 642l456 -456M951.7 642l456 -456M954.4 642l456 -456M957.1 642l456 -456M959.8 642l456 -456M962.5 642l456 -456M965.2 642l456 -456M967.9 642l456 -456M970.6 642l456 -456M973.3 642l456 -456M976 642l456 -456M978.7 642l456 -456M981.4 642l456 -456M984.1 642l456 -456M986.8 642l456 -456M989.5 642l456 -456M992.2 642l456 -456M994.9 642l456 -456M997.6 642l456 -456M1000.3 642l456 -456M1003 642l456 -456M1005.7 642l456 -456M1008.4 642l456 -456M1011.1 642l456 -456M1013.8 642l456 -456M1016.5 642l456 -456M1019.2 642l456 -456M1021.9 642l456 -456M1024.6 642l456 -456M1027.3 642l456 -456M1030 642l456 -456M1032.7 642l456 -456M1035.4 642l456 -456M1038.1 642l456 -456M1040.8 642l456 -456M1043.5 642l456 -456M1046.2 642l456 -456M1048.9 642l456 -456M1051.6 642l456 -456M1054.3 642l456 -456M1057 642l456 -456M1059.7 642l456 -456M1062.4 642l456 -456M1065.1 642l456 -456M1067.8 642l456 -456M1070.5 642l456 -456M1073.2 642l456 -456M1075.9 642l456 -456M1078.6 642l456 -456M1081.3 642l456 -456M1084 642l456 -456M1086.7 642l456 -456M1089.4 642l456 -456M1092.1 642l456 -456M1094.8 642l456 -456M1097.5 642l456 -456M1100.2 642l456 -456M1102.9 642l456 -456M1105.6 642l456 -456M1108.3 642l456 -456M1111 642l456 -456M1113.7 642l456 -456M1116.4 642l456 -456M1119.1 642l456 -456M1121.8 642l456 -456M1124.5 642l456 -456M1127.2 642l456 -456M1129.9 642l456 -456M1132.6 642l456 -456M1135.3 642l456 -456M1138 642l456 -456M1140.7 642l456 -456M1143.4 642l456 -456" fill="none" stroke="#2a2a2a" stroke-width="0.8"/>
<path id="L1ff" d="M-400.7 642l456 -456M-398.5 642l456 -456M-396.3 642l456 -456M-394.1 642l456 -456M-391.9 642l456 -456M-389.7 642l456 -456M-387.5 642l456 -456M-385.3 642l456 -456M-383.1 642l456 -456M-380.9 642l456 -456M-378.7 642l456 -456M-376.5 642l456 -456M-374.3 642l456 -456M-372.1 642l456 -456M-369.9 642l456 -456M-367.7 642l456 -456M-365.5 642l456 -456M-363.3 642l456 -456M-361.1 642l456 -456M-358.9 642l456 -456M-356.7 642l456 -456M-354.5 642l456 -456M-352.3 642l456 -456M-350.1 642l456 -456M-347.9 642l456 -456M-345.7 642l456 -456M-343.5 642l456 -456M-341.3 642l456 -456M-339.1 642l456 -456M-336.9 642l456 -456M-334.7 642l456 -456M-332.5 642l456 -456M-330.3 642l456 -456M-328.1 642l456 -456M-325.9 642l456 -456M-323.7 642l456 -456M-321.5 642l456 -456M-319.3 642l456 -456M-317.1 642l456 -456M-314.9 642l456 -456M-312.7 642l456 -456M-310.5 642l456 -456M-308.3 642l456 -456M-306.1 642l456 -456M-303.9 642l456 -456M-301.7 642l456 -456M-299.5 642l456 -456M-297.3 642l456 -456M-295.1 642l456 -456M-292.9 642l456 -456M-290.7 642l456 -456M-288.5 642l456 -456M-286.3 642l456 -456M-284.1 642l456 -456M-281.9 642l456 -456M-279.7 642l456 -456M-277.5 642l456 -456M-275.3 642l456 -456M-273.1 642l456 -456M-270.9 642l456 -456M-268.7 642l456 -456M-266.5 642l456 -456M-264.3 642l456 -456M-262.1 642l456 -456M-259.9 642l456 -456M-257.7 642l456 -456M-255.5 642l456 -456M-253.3 642l456 -456M-251.1 642l456 -456M-248.9 642l456 -456M-246.7 642l456 -456M-244.5 642l456 -456M-242.3 642l456 -456M-240.1 642l456 -456M-237.9 642l456 -456M-235.7 642l456 -456M-233.5 642l456 -456M-231.3 642l456 -456M-229.1 642l456 -456M-226.9 642l456 -456M-224.7 642l456 -456M-222.5 642l456 -456M-220.3 642l456 -456M-218.1 642l456 -456M-215.9 642l456 -456M-213.7 642l456 -456M-211.5 642l456 -456M-209.3 642l456 -456M-207.1 642l456 -456M-204.9 642l456 -456M-202.7 642l456 -456M-200.5 642l456 -456M-198.3 642l456 -456M-196.1 642l456 -456M-193.9 642l456 -456M-191.7 642l456 -456M-189.5 642l456 -456M-187.3 642l456 -456M-185.1 642l456 -456M-182.9 642l456 -456M-180.7 642l456 -456M-178.5 642l456 -456M-176.3 642l456 -456M-174.1 642l456 -456M-171.9 642l456 -456M-169.7 642l456 -456M-167.5 642l456 -456M-165.3 642l456 -456M-163.1 642l456 -456M-160.9 642l456 -456M-158.7 642l456 -456M-156.5 642l456 -456M-154.3 642l456 -456M-152.1 642l456 -456M-149.9 642l456 -456M-147.7 642l456 -456M-145.5 642l456 -456M-143.3 642l456 -456M-141.1 642l456 -456M-138.9 642l456 -456M-136.7 642l456 -456M-134.5 642l456 -456M-132.3 642l456 -456M-130.1 642l456 -456M-127.9 642l456 -456M-125.7 642l456 -456M-123.5 642l456 -456M-121.3 642l456 -456M-119.1 642l456 -456M-116.9 642l456 -456M-114.7 642l456 -456M-112.5 642l456 -456M-110.3 642l456 -456M-108.1 642l456 -456M-105.9 642l456 -456M-103.7 642l456 -456M-101.5 642l456 -456M-99.3 642l456 -456M-97.1 642l456 -456M-94.9 642l456 -456M-92.7 642l456 -456M-90.5 642l456 -456M-88.3 642l456 -456M-86.1 642l456 -456M-83.9 642l456 -456M-81.7 642l456 -456M-79.5 642l456 -456M-77.3 642l456 -456M-75.1 642l456 -456M-72.9 642l456 -456M-70.7 642l456 -456M-68.5 642l456 -456M-66.3 642l456 -456M-64.1 642l456 -456M-61.9 642l456 -456M-59.7 642l456 -456M-57.5 642l456 -456M-55.3 642l456 -456M-53.1 642l456 -456M-50.9 642l456 -456M-48.7 642l456 -456M-46.5 642l456 -456M-44.3 642l456 -456M-42.1 642l456 -456M-39.9 642l456 -456M-37.7 642l456 -456M-35.5 642l456 -456M-33.3 642l456 -456M-31.1 642l456 -456M-28.9 642l456 -456M-26.7 642l456 -456M-24.5 642l456 -456M-22.3 642l456 -456M-20.1 642l456 -456M-17.9 642l456 -456M-15.7 642l456 -456M-13.5 642l456 -456M-11.3 642l456 -456M-9.1 642l456 -456M-6.9 642l456 -456M-4.7 642l456 -456M-2.5 642l456 -456M-0.3 642l456 -456M1.9 642l456 -456M4.1 642l456 -456M6.3 642l456 -456M8.5 642l456 -456M10.7 642l456 -456M12.9 642l456 -456M15.1 642l456 -456M17.3 642l456 -456M19.5 642l456 -456M21.7 642l456 -456M23.9 642l456 -456M26.1 642l456 -456M28.3 642l456 -456M30.5 642l456 -456M32.7 642l456 -456M34.9 642l456 -456M37.1 642l456 -456M39.3 642l456 -456M41.5 642l456 -456M43.7 642l456 -456M45.9 642l456 -456M48.1 642l456 -456M50.3 642l456 -456M52.5 642l456 -456M54.7 642l456 -456M56.9 642l456 -456M59.1 642l456 -456M61.3 642l456 -456M63.5 642l456 -456M65.7 642l456 -456M67.9 642l456 -456M70.1 642l456 -456M72.3 642l456 -456M74.5 642l456 -456M76.7 642l456 -456M78.9 642l456 -456M81.1 642l456 -456M83.3 642l456 -456M85.5 642l456 -456M87.7 642l456 -456M89.9 642l456 -456M92.1 642l456 -456M94.3 642l456 -456M96.5 642l456 -456M98.7 642l456 -456M100.9 642l456 -456M103.1 642l456 -456M105.3 642l456 -456M107.5 642l456 -456M109.7 642l456 -456M111.9 642l456 -456M114.1 642l456 -456M116.3 642l456 -456M118.5 642l456 -456M120.7 642l456 -456M122.9 642l456 -456M125.1 642l456 -456M127.3 642l456 -456M129.5 642l456 -456M131.7 642l456 -456M133.9 642l456 -456M136.1 642l456 -456M138.3 642l456 -456M140.5 642l456 -456M142.7 642l456 -456M144.9 642l456 -456M147.1 642l456 -456M149.3 642l456 -456M151.5 642l456 -456M153.7 642l456 -456M155.9 642l456 -456M158.1 642l456 -456M160.3 642l456 -456M162.5 642l456 -456M164.7 642l456 -456M166.9 642l456 -456M169.1 642l456 -456M171.3 642l456 -456M173.5 642l456 -456M175.7 642l456 -456M177.9 642l456 -456M180.1 642l456 -456M182.3 642l456 -456M184.5 642l456 -456M186.7 642l456 -456M188.9 642l456 -456M191.1 642l456 -456M193.3 642l456 -456M195.5 642l456 -456M197.7 642l456 -456M199.9 642l456 -456M202.1 642l456 -456M204.3 642l456 -456M206.5 642l456 -456M208.7 642l456 -456M210.9 642l456 -456M213.1 642l456 -456M215.3 642l456 -456M217.5 642l456 -456M219.7 642l456 -456M221.9 642l456 -456M224.1 642l456 -456M226.3 642l456 -456M228.5 642l456 -456M230.7 642l456 -456M232.9 642l456 -456M235.1 642l456 -456M237.3 642l456 -456M239.5 642l456 -456M241.7 642l456 -456M243.9 642l456 -456M246.1 642l456 -456M248.3 642l456 -456M250.5 642l456 -456M252.7 642l456 -456M254.9 642l456 -456M257.1 642l456 -456M259.3 642l456 -456M261.5 642l456 -456M263.7 642l456 -456M265.9 642l456 -456M268.1 642l456 -456M270.3 642l456 -456M272.5 642l456 -456M274.7 642l456 -456M276.9 642l456 -456M279.1 642l456 -456M281.3 642l456 -456M283.5 642l456 -456M285.7 642l456 -456M287.9 642l456 -456M290.1 642l456 -456M292.3 642l456 -456M294.5 642l456 -456M296.7 642l456 -456M298.9 642l456 -456M301.1 642l456 -456M303.3 642l456 -456M305.5 642l456 -456M307.7 642l456 -456M309.9 642l456 -456M312.1 642l456 -456M314.3 642l456 -456M316.5 642l456 -456M318.7 642l456 -456M320.9 642l456 -456M323.1 642l456 -456M325.3 642l456 -456M327.5 642l456 -456M329.7 642l456 -456M331.9 642l456 -456M334.1 642l456 -456M336.3 642l456 -456M338.5 642l456 -456M340.7 642l456 -456M342.9 642l456 -456M345.1 642l456 -456M347.3 642l456 -456M349.5 642l456 -456M351.7 642l456 -456M353.9 642l456 -456M356.1 642l456 -456M358.3 642l456 -456M360.5 642l456 -456M362.7 642l456 -456M364.9 642l456 -456M367.1 642l456 -456M369.3 642l456 -456M371.5 642l456 -456M373.7 642l456 -456M375.9 642l456 -456M378.1 642l456 -456M380.3 642l456 -456M382.5 642l456 -456M384.7 642l456 -456M386.9 642l456 -456M389.1 642l456 -456M391.3 642l456 -456M393.5 642l456 -456M395.7 642l456 -456M397.9 642l456 -456M400.1 642l456 -456M402.3 642l456 -456M404.5 642l456 -456M406.7 642l456 -456M408.9 642l456 -456M411.1 642l456 -456M413.3 642l456 -456M415.5 642l456 -456M417.7 642l456 -456M419.9 642l456 -456M422.1 642l456 -456M424.3 642l456 -456M426.5 642l456 -456M428.7 642l456 -456M430.9 642l456 -456M433.1 642l456 -456M435.3 642l456 -456M437.5 642l456 -456M439.7 642l456 -456M441.9 642l456 -456M444.1 642l456 -456M446.3 642l456 -456M448.5 642l456 -456M450.7 642l456 -456M452.9 642l456 -456M455.1 642l456 -456M457.3 642l456 -456M459.5 642l456 -456M461.7 642l456 -456M463.9 642l456 -456M466.1 642l456 -456M468.3 642l456 -456M470.5 642l456 -456M472.7 642l456 -456M474.9 642l456 -456M477.1 642l456 -456M479.3 642l456 -456M481.5 642l456 -456M483.7 642l456 -456M485.9 642l456 -456M488.1 642l456 -456M490.3 642l456 -456M492.5 642l456 -456M494.7 642l456 -456M496.9 642l456 -456M499.1 642l456 -456M501.3 642l456 -456M503.5 642l456 -456M505.7 642l456 -456M507.9 642l456 -456M510.1 642l456 -456M512.3 642l456 -456M514.5 642l456 -456M516.7 642l456 -456M518.9 642l456 -456M521.1 642l456 -456M523.3 642l456 -456M525.5 642l456 -456M527.7 642l456 -456M529.9 642l456 -456M532.1 642l456 -456M534.3 642l456 -456M536.5 642l456 -456M538.7 642l456 -456M540.9 642l456 -456M543.1 642l456 -456M545.3 642l456 -456M547.5 642l456 -456M549.7 642l456 -456M551.9 642l456 -456M554.1 642l456 -456M556.3 642l456 -456M558.5 642l456 -456M560.7 642l456 -456M562.9 642l456 -456M565.1 642l456 -456M567.3 642l456 -456M569.5 642l456 -456M571.7 642l456 -456M573.9 642l456 -456M576.1 642l456 -456M578.3 642l456 -456M580.5 642l456 -456M582.7 642l456 -456M584.9 642l456 -456M587.1 642l456 -456M589.3 642l456 -456M591.5 642l456 -456M593.7 642l456 -456M595.9 642l456 -456M598.1 642l456 -456M600.3 642l456 -456M602.5 642l456 -456M604.7 642l456 -456M606.9 642l456 -456M609.1 642l456 -456M611.3 642l456 -456M613.5 642l456 -456M615.7 642l456 -456M617.9 642l456 -456M620.1 642l456 -456M622.3 642l456 -456M624.5 642l456 -456M626.7 642l456 -456M628.9 642l456 -456M631.1 642l456 -456M633.3 642l456 -456M635.5 642l456 -456M637.7 642l456 -456M639.9 642l456 -456M642.1 642l456 -456M644.3 642l456 -456M646.5 642l456 -456M648.7 642l456 -456M650.9 642l456 -456M653.1 642l456 -456M655.3 642l456 -456M657.5 642l456 -456M659.7 642l456 -456M661.9 642l456 -456M664.1 642l456 -456M666.3 642l456 -456M668.5 642l456 -456M670.7 642l456 -456M672.9 642l456 -456M675.1 642l456 -456M677.3 642l456 -456M679.5 642l456 -456M681.7 642l456 -456M683.9 642l456 -456M686.1 642l456 -456M688.3 642l456 -456M690.5 642l456 -456M692.7 642l456 -456M694.9 642l456 -456M697.1 642l456 -456M699.3 642l456 -456M701.5 642l456 -456M703.7 642l456 -456M705.9 642l456 -456M708.1 642l456 -456M710.3 642l456 -456M712.5 642l456 -456M714.7 642l456 -456M716.9 642l456 -456M719.1 642l456 -456M721.3 642l456 -456M723.5 642l456 -456M725.7 642l456 -456M727.9 642l456 -456M730.1 642l456 -456M732.3 642l456 -456M734.5 642l456 -456M736.7 642l456 -456M738.9 642l456 -456M741.1 642l456 -456M743.3 642l456 -456M745.5 642l456 -456M747.7 642l456 -456M749.9 642l456 -456M752.1 642l456 -456M754.3 642l456 -456M756.5 642l456 -456M758.7 642l456 -456M760.9 642l456 -456M763.1 642l456 -456M765.3 642l456 -456M767.5 642l456 -456M769.7 642l456 -456M771.9 642l456 -456M774.1 642l456 -456M776.3 642l456 -456M778.5 642l456 -456M780.7 642l456 -456M782.9 642l456 -456M785.1 642l456 -456M787.3 642l456 -456M789.5 642l456 -456M791.7 642l456 -456M793.9 642l456 -456M796.1 642l456 -456M798.3 642l456 -456M800.5 642l456 -456M802.7 642l456 -456M804.9 642l456 -456M807.1 642l456 -456M809.3 642l456 -456M811.5 642l456 -456M813.7 642l456 -456M815.9 642l456 -456M818.1 642l456 -456M820.3 642l456 -456M822.5 642l456 -456M824.7 642l456 -456M826.9 642l456 -456M829.1 642l456 -456M831.3 642l456 -456M833.5 642l456 -456M835.7 642l456 -456M837.9 642l456 -456M840.1 642l456 -456M842.3 642l456 -456M844.5 642l456 -456M846.7 642l456 -456M848.9 642l456 -456M851.1 642l456 -456M853.3 642l456 -456M855.5 642l456 -456M857.7 642l456 -456M859.9 642l456 -456M862.1 642l456 -456M864.3 642l456 -456M866.5 642l456 -456M868.7 642l456 -456M870.9 642l456 -456M873.1 642l456 -456M875.3 642l456 -456M877.5 642l456 -456M879.7 642l456 -456M881.9 642l456 -456M884.1 642l456 -456M886.3 642l456 -456M888.5 642l456 -456M890.7 642l456 -456M892.9 642l456 -456M895.1 642l456 -456M897.3 642l456 -456M899.5 642l456 -456M901.7 642l456 -456M903.9 642l456 -456M906.1 642l456 -456M908.3 642l456 -456M910.5 642l456 -456M912.7 642l456 -456M914.9 642l456 -456M917.1 642l456 -456M919.3 642l456 -456M921.5 642l456 -456M923.7 642l456 -456M925.9 642l456 -456M928.1 642l456 -456M930.3 642l456 -456M932.5 642l456 -456M934.7 642l456 -456M936.9 642l456 -456M939.1 642l456 -456M941.3 642l456 -456M943.5 642l456 -456M945.7 642l456 -456M947.9 642l456 -456M950.1 642l456 -456M952.3 642l456 -456M954.5 642l456 -456M956.7 642l456 -456M958.9 642l456 -456M961.1 642l456 -456M963.3 642l456 -456M965.5 642l456 -456M967.7 642l456 -456M969.9 642l456 -456M972.1 642l456 -456M974.3 642l456 -456M976.5 642l456 -456M978.7 642l456 -456M980.9 642l456 -456M983.1 642l456 -456M985.3 642l456 -456M987.5 642l456 -456M989.7 642l456 -456M991.9 642l456 -456M994.1 642l456 -456M996.3 642l456 -456M998.5 642l456 -456M1000.7 642l456 -456M1002.9 642l456 -456M1005.1 642l456 -456M1007.3 642l456 -456M1009.5 642l456 -456M1011.7 642l456 -456M1013.9 642l456 -456M1016.1 642l456 -456M1018.3 642l456 -456M1020.5 642l456 -456M1022.7 642l456 -456M1024.9 642l456 -456M1027.1 642l456 -456M1029.3 642l456 -456M1031.5 642l456 -456M1033.7 642l456 -456M1035.9 642l456 -456M1038.1 642l456 -456M1040.3 642l456 -456M1042.5 642l456 -456M1044.7 642l456 -456M1046.9 642l456 -456M1049.1 642l456 -456M1051.3 642l456 -456M1053.5 642l456 -456M1055.7 642l456 -456M1057.9 642l456 -456M1060.1 642l456 -456M1062.3 642l456 -456M1064.5 642l456 -456M1066.7 642l456 -456M1068.9 642l456 -456M1071.1 642l456 -456M1073.3 642l456 -456M1075.5 642l456 -456M1077.7 642l456 -456M1079.9 642l456 -456M1082.1 642l456 -456M1084.3 642l456 -456M1086.5 642l456 -456M1088.7 642l456 -456M1090.9 642l456 -456M1093.1 642l456 -456M1095.3 642l456 -456M1097.5 642l456 -456M1099.7 642l456 -456M1101.9 642l456 -456M1104.1 642l456 -456M1106.3 642l456 -456M1108.5 642l456 -456M1110.7 642l456 -456M1112.9 642l456 -456M1115.1 642l456 -456M1117.3 642l456 -456M1119.5 642l456 -456M1121.7 642l456 -456M1123.9 642l456 -456M1126.1 642l456 -456M1128.3 642l456 -456M1130.5 642l456 -456M1132.7 642l456 -456M1134.9 642l456 -456M1137.1 642l456 -456M1139.3 642l456 -456M1141.5 642l456 -456M1143.7 642l456 -456M1145.9 642l456 -456" fill="none" stroke="#2a2a2a" stroke-width="0.8"/>
<path id="L2f" d="M-400.5 186l456 456M-397.8 186l456 456M-395.1 186l456 456M-392.4 186l456 456M-389.7 186l456 456M-387 186l456 456M-384.3 186l456 456M-381.6 186l456 456M-378.9 186l456 456M-376.2 186l456 456M-373.5 186l456 456M-370.8 186l456 456M-368.1 186l456 456M-365.4 186l456 456M-362.7 186l456 456M-360 186l456 456M-357.3 186l456 456M-354.6 186l456 456M-351.9 186l456 456M-349.2 186l456 456M-346.5 186l456 456M-343.8 186l456 456M-341.1 186l456 456M-338.4 186l456 456M-335.7 186l456 456M-333 186l456 456M-330.3 186l456 456M-327.6 186l456 456M-324.9 186l456 456M-322.2 186l456 456M-319.5 186l456 456M-316.8 186l456 456M-314.1 186l456 456M-311.4 186l456 456M-308.7 186l456 456M-306 186l456 456M-303.3 186l456 456M-300.6 186l456 456M-297.9 186l456 456M-295.2 186l456 456M-292.5 186l456 456M-289.8 186l456 456M-287.1 186l456 456M-284.4 186l456 456M-281.7 186l456 456M-279 186l456 456M-276.3 186l456 456M-273.6 186l456 456M-270.9 186l456 456M-268.2 186l456 456M-265.5 186l456 456M-262.8 186l456 456M-260.1 186l456 456M-257.4 186l456 456M-254.7 186l456 456M-252 186l456 456M-249.3 186l456 456M-246.6 186l456 456M-243.9 186l456 456M-241.2 186l456 456M-238.5 186l456 456M-235.8 186l456 456M-233.1 186l456 456M-230.4 186l456 456M-227.7 186l456 456M-225 186l456 456M-222.3 186l456 456M-219.6 186l456 456M-216.9 186l456 456M-214.2 186l456 456M-211.5 186l456 456M-208.8 186l456 456M-206.1 186l456 456M-203.4 186l456 456M-200.7 186l456 456M-198 186l456 456M-195.3 186l456 456M-192.6 186l456 456M-189.9 186l456 456M-187.2 186l456 456M-184.5 186l456 456M-181.8 186l456 456M-179.1 186l456 456M-176.4 186l456 456M-173.7 186l456 456M-171 186l456 456M-168.3 186l456 456M-165.6 186l456 456M-162.9 186l456 456M-160.2 186l456 456M-157.5 186l456 456M-154.8 186l456 456M-152.1 186l456 456M-149.4 186l456 456M-146.7 186l456 456M-144 186l456 456M-141.3 186l456 456M-138.6 186l456 456M-135.9 186l456 456M-133.2 186l456 456M-130.5 186l456 456M-127.8 186l456 456M-125.1 186l456 456M-122.4 186l456 456M-119.7 186l456 456M-117 186l456 456M-114.3 186l456 456M-111.6 186l456 456M-108.9 186l456 456M-106.2 186l456 456M-103.5 186l456 456M-100.8 186l456 456M-98.1 186l456 456M-95.4 186l456 456M-92.7 186l456 456M-90 186l456 456M-87.3 186l456 456M-84.6 186l456 456M-81.9 186l456 456M-79.2 186l456 456M-76.5 186l456 456M-73.8 186l456 456M-71.1 186l456 456M-68.4 186l456 456M-65.7 186l456 456M-63 186l456 456M-60.3 186l456 456M-57.6 186l456 456M-54.9 186l456 456M-52.2 186l456 456M-49.5 186l456 456M-46.8 186l456 456M-44.1 186l456 456M-41.4 186l456 456M-38.7 186l456 456M-36 186l456 456M-33.3 186l456 456M-30.6 186l456 456M-27.9 186l456 456M-25.2 186l456 456M-22.5 186l456 456M-19.8 186l456 456M-17.1 186l456 456M-14.4 186l456 456M-11.7 186l456 456M-9 186l456 456M-6.3 186l456 456M-3.6 186l456 456M-0.9 186l456 456M1.8 186l456 456M4.5 186l456 456M7.2 186l456 456M9.9 186l456 456M12.6 186l456 456M15.3 186l456 456M18 186l456 456M20.7 186l456 456M23.4 186l456 456M26.1 186l456 456M28.8 186l456 456M31.5 186l456 456M34.2 186l456 456M36.9 186l456 456M39.6 186l456 456M42.3 186l456 456M45 186l456 456M47.7 186l456 456M50.4 186l456 456M53.1 186l456 456M55.8 186l456 456M58.5 186l456 456M61.2 186l456 456M63.9 186l456 456M66.6 186l456 456M69.3 186l456 456M72 186l456 456M74.7 186l456 456M77.4 186l456 456M80.1 186l456 456M82.8 186l456 456M85.5 186l456 456M88.2 186l456 456M90.9 186l456 456M93.6 186l456 456M96.3 186l456 456M99 186l456 456M101.7 186l456 456M104.4 186l456 456M107.1 186l456 456M109.8 186l456 456M112.5 186l456 456M115.2 186l456 456M117.9 186l456 456M120.6 186l456 456M123.3 186l456 456M126 186l456 456M128.7 186l456 456M131.4 186l456 456M134.1 186l456 456M136.8 186l456 456M139.5 186l456 456M142.2 186l456 456M144.9 186l456 456M147.6 186l456 456M150.3 186l456 456M153 186l456 456M155.7 186l456 456M158.4 186l456 456M161.1 186l456 456M163.8 186l456 456M166.5 186l456 456M169.2 186l456 456M171.9 186l456 456M174.6 186l456 456M177.3 186l456 456M180 186l456 456M182.7 186l456 456M185.4 186l456 456M188.1 186l456 456M190.8 186l456 456M193.5 186l456 456M196.2 186l456 456M198.9 186l456 456M201.6 186l456 456M204.3 186l456 456M207 186l456 456M209.7 186l456 456M212.4 186l456 456M215.1 186l456 456M217.8 186l456 456M220.5 186l456 456M223.2 186l456 456M225.9 186l456 456M228.6 186l456 456M231.3 186l456 456M234 186l456 456M236.7 186l456 456M239.4 186l456 456M242.1 186l456 456M244.8 186l456 456M247.5 186l456 456M250.2 186l456 456M252.9 186l456 456M255.6 186l456 456M258.3 186l456 456M261 186l456 456M263.7 186l456 456M266.4 186l456 456M269.1 186l456 456M271.8 186l456 456M274.5 186l456 456M277.2 186l456 456M279.9 186l456 456M282.6 186l456 456M285.3 186l456 456M288 186l456 456M290.7 186l456 456M293.4 186l456 456M296.1 186l456 456M298.8 186l456 456M301.5 186l456 456M304.2 186l456 456M306.9 186l456 456M309.6 186l456 456M312.3 186l456 456M315 186l456 456M317.7 186l456 456M320.4 186l456 456M323.1 186l456 456M325.8 186l456 456M328.5 186l456 456M331.2 186l456 456M333.9 186l456 456M336.6 186l456 456M339.3 186l456 456M342 186l456 456M344.7 186l456 456M347.4 186l456 456M350.1 186l456 456M352.8 186l456 456M355.5 186l456 456M358.2 186l456 456M360.9 186l456 456M363.6 186l456 456M366.3 186l456 456M369 186l456 456M371.7 186l456 456M374.4 186l456 456M377.1 186l456 456M379.8 186l456 456M382.5 186l456 456M385.2 186l456 456M387.9 186l456 456M390.6 186l456 456M393.3 186l456 456M396 186l456 456M398.7 186l456 456M401.4 186l456 456M404.1 186l456 456M406.8 186l456 456M409.5 186l456 456M412.2 186l456 456M414.9 186l456 456M417.6 186l456 456M420.3 186l456 456M423 186l456 456M425.7 186l456 456M428.4 186l456 456M431.1 186l456 456M433.8 186l456 456M436.5 186l456 456M439.2 186l456 456M441.9 186l456 456M444.6 186l456 456M447.3 186l456 456M450 186l456 456M452.7 186l456 456M455.4 186l456 456M458.1 186l456 456M460.8 186l456 456M463.5 186l456 456M466.2 186l456 456M468.9 186l456 456M471.6 186l456 456M474.3 186l456 456M477 186l456 456M479.7 186l456 456M482.4 186l456 456M485.1 186l456 456M487.8 186l456 456M490.5 186l456 456M493.2 186l456 456M495.9 186l456 456M498.6 186l456 456M501.3 186l456 456M504 186l456 456M506.7 186l456 456M509.4 186l456 456M512.1 186l456 456M514.8 186l456 456M517.5 186l456 456M520.2 186l456 456M522.9 186l456 456M525.6 186l456 456M528.3 186l456 456M531 186l456 456M533.7 186l456 456M536.4 186l456 456M539.1 186l456 456M541.8 186l456 456M544.5 186l456 456M547.2 186l456 456M549.9 186l456 456M552.6 186l456 456M555.3 186l456 456M558 186l456 456M560.7 186l456 456M563.4 186l456 456M566.1 186l456 456M568.8 186l456 456M571.5 186l456 456M574.2 186l456 456M576.9 186l456 456M579.6 186l456 456M582.3 186l456 456M585 186l456 456M587.7 186l456 456M590.4 186l456 456M593.1 186l456 456M595.8 186l456 456M598.5 186l456 456M601.2 186l456 456M603.9 186l456 456M606.6 186l456 456M609.3 186l456 456M612 186l456 456M614.7 186l456 456M617.4 186l456 456M620.1 186l456 456M622.8 186l456 456M625.5 186l456 456M628.2 186l456 456M630.9 186l456 456M633.6 186l456 456M636.3 186l456 456M639 186l456 456M641.7 186l456 456M644.4 186l456 456M647.1 186l456 456M649.8 186l456 456M652.5 186l456 456M655.2 186l456 456M657.9 186l456 456M660.6 186l456 456M663.3 186l456 456M666 186l456 456M668.7 186l456 456M671.4 186l456 456M674.1 186l456 456M676.8 186l456 456M679.5 186l456 456M682.2 186l456 456M684.9 186l456 456M687.6 186l456 456M690.3 186l456 456M693 186l456 456M695.7 186l456 456M698.4 186l456 456M701.1 186l456 456M703.8 186l456 456M706.5 186l456 456M709.2 186l456 456M711.9 186l456 456M714.6 186l456 456M717.3 186l456 456M720 186l456 456M722.7 186l456 456M725.4 186l456 456M728.1 186l456 456M730.8 186l456 456M733.5 186l456 456M736.2 186l456 456M738.9 186l456 456M741.6 186l456 456M744.3 186l456 456M747 186l456 456M749.7 186l456 456M752.4 186l456 456M755.1 186l456 456M757.8 186l456 456M760.5 186l456 456M763.2 186l456 456M765.9 186l456 456M768.6 186l456 456M771.3 186l456 456M774 186l456 456M776.7 186l456 456M779.4 186l456 456M782.1 186l456 456M784.8 186l456 456M787.5 186l456 456M790.2 186l456 456M792.9 186l456 456M795.6 186l456 456M798.3 186l456 456M801 186l456 456M803.7 186l456 456M806.4 186l456 456M809.1 186l456 456M811.8 186l456 456M814.5 186l456 456M817.2 186l456 456M819.9 186l456 456M822.6 186l456 456M825.3 186l456 456M828 186l456 456M830.7 186l456 456M833.4 186l456 456M836.1 186l456 456M838.8 186l456 456M841.5 186l456 456M844.2 186l456 456M846.9 186l456 456M849.6 186l456 456M852.3 186l456 456M855 186l456 456M857.7 186l456 456M860.4 186l456 456M863.1 186l456 456M865.8 186l456 456M868.5 186l456 456M871.2 186l456 456M873.9 186l456 456M876.6 186l456 456M879.3 186l456 456M882 186l456 456M884.7 186l456 456M887.4 186l456 456M890.1 186l456 456M892.8 186l456 456M895.5 186l456 456M898.2 186l456 456M900.9 186l456 456M903.6 186l456 456M906.3 186l456 456M909 186l456 456M911.7 186l456 456M914.4 186l456 456M917.1 186l456 456M919.8 186l456 456M922.5 186l456 456M925.2 186l456 456M927.9 186l456 456M930.6 186l456 456M933.3 186l456 456M936 186l456 456M938.7 186l456 456M941.4 186l456 456M944.1 186l456 456M946.8 186l456 456M949.5 186l456 456M952.2 186l456 456M954.9 186l456 456M957.6 186l456 456M960.3 186l456 456M963 186l456 456M965.7 186l456 456M968.4 186l456 456M971.1 186l456 456M973.8 186l456 456M976.5 186l456 456M979.2 186l456 456M981.9 186l456 456M984.6 186l456 456M987.3 186l456 456M990 186l456 456M992.7 186l456 456M995.4 186l456 456M998.1 186l456 456M1000.8 186l456 456M1003.5 186l456 456M1006.2 186l456 456M1008.9 186l456 456M1011.6 186l456 456M1014.3 186l456 456M1017 186l456 456M1019.7 186l456 456M1022.4 186l456 456M1025.1 186l456 456M1027.8 186l456 456M1030.5 186l456 456M1033.2 186l456 456M1035.9 186l456 456M1038.6 186l456 456M1041.3 186l456 456M1044 186l456 456M1046.7 186l456 456M1049.4 186l456 456M1052.1 186l456 456M1054.8 186l456 456M1057.5 186l456 456M1060.2 186l456 456M1062.9 186l456 456M1065.6 186l456 456M1068.3 186l456 456M1071 186l456 456M1073.7 186l456 456M1076.4 186l456 456M1079.1 186l456 456M1081.8 186l456 456M1084.5 186l456 456M1087.2 186l456 456M1089.9 186l456 456M1092.6 186l456 456M1095.3 186l456 456M1098 186l456 456M1100.7 186l456 456M1103.4 186l456 456M1106.1 186l456 456M1108.8 186l456 456M1111.5 186l456 456M1114.2 186l456 456M1116.9 186l456 456M1119.6 186l456 456M1122.3 186l456 456M1125 186l456 456M1127.7 186l456 456M1130.4 186l456 456M1133.1 186l456 456M1135.8 186l456 456M1138.5 186l456 456M1141.2 186l456 456M1143.9 186l456 456" fill="none" stroke="#2a2a2a" stroke-width="0.8"/>
<path id="L1m" d="M-400.3 642l456 -456M-397.1 642l456 -456M-393.9 642l456 -456M-390.7 642l456 -456M-387.5 642l456 -456M-384.3 642l456 -456M-381.1 642l456 -456M-377.9 642l456 -456M-374.7 642l456 -456M-371.5 642l456 -456M-368.3 642l456 -456M-365.1 642l456 -456M-361.9 642l456 -456M-358.7 642l456 -456M-355.5 642l456 -456M-352.3 642l456 -456M-349.1 642l456 -456M-345.9 642l456 -456M-342.7 642l456 -456M-339.5 642l456 -456M-336.3 642l456 -456M-333.1 642l456 -456M-329.9 642l456 -456M-326.7 642l456 -456M-323.5 642l456 -456M-320.3 642l456 -456M-317.1 642l456 -456M-313.9 642l456 -456M-310.7 642l456 -456M-307.5 642l456 -456M-304.3 642l456 -456M-301.1 642l456 -456M-297.9 642l456 -456M-294.7 642l456 -456M-291.5 642l456 -456M-288.3 642l456 -456M-285.1 642l456 -456M-281.9 642l456 -456M-278.7 642l456 -456M-275.5 642l456 -456M-272.3 642l456 -456M-269.1 642l456 -456M-265.9 642l456 -456M-262.7 642l456 -456M-259.5 642l456 -456M-256.3 642l456 -456M-253.1 642l456 -456M-249.9 642l456 -456M-246.7 642l456 -456M-243.5 642l456 -456M-240.3 642l456 -456M-237.1 642l456 -456M-233.9 642l456 -456M-230.7 642l456 -456M-227.5 642l456 -456M-224.3 642l456 -456M-221.1 642l456 -456M-217.9 642l456 -456M-214.7 642l456 -456M-211.5 642l456 -456M-208.3 642l456 -456M-205.1 642l456 -456M-201.9 642l456 -456M-198.7 642l456 -456M-195.5 642l456 -456M-192.3 642l456 -456M-189.1 642l456 -456M-185.9 642l456 -456M-182.7 642l456 -456M-179.5 642l456 -456M-176.3 642l456 -456M-173.1 642l456 -456M-169.9 642l456 -456M-166.7 642l456 -456M-163.5 642l456 -456M-160.3 642l456 -456M-157.1 642l456 -456M-153.9 642l456 -456M-150.7 642l456 -456M-147.5 642l456 -456M-144.3 642l456 -456M-141.1 642l456 -456M-137.9 642l456 -456M-134.7 642l456 -456M-131.5 642l456 -456M-128.3 642l456 -456M-125.1 642l456 -456M-121.9 642l456 -456M-118.7 642l456 -456M-115.5 642l456 -456M-112.3 642l456 -456M-109.1 642l456 -456M-105.9 642l456 -456M-102.7 642l456 -456M-99.5 642l456 -456M-96.3 642l456 -456M-93.1 642l456 -456M-89.9 642l456 -456M-86.7 642l456 -456M-83.5 642l456 -456M-80.3 642l456 -456M-77.1 642l456 -456M-73.9 642l456 -456M-70.7 642l456 -456M-67.5 642l456 -456M-64.3 642l456 -456M-61.1 642l456 -456M-57.9 642l456 -456M-54.7 642l456 -456M-51.5 642l456 -456M-48.3 642l456 -456M-45.1 642l456 -456M-41.9 642l456 -456M-38.7 642l456 -456M-35.5 642l456 -456M-32.3 642l456 -456M-29.1 642l456 -456M-25.9 642l456 -456M-22.7 642l456 -456M-19.5 642l456 -456M-16.3 642l456 -456M-13.1 642l456 -456M-9.9 642l456 -456M-6.7 642l456 -456M-3.5 642l456 -456M-0.3 642l456 -456M2.9 642l456 -456M6.1 642l456 -456M9.3 642l456 -456M12.5 642l456 -456M15.7 642l456 -456M18.9 642l456 -456M22.1 642l456 -456M25.3 642l456 -456M28.5 642l456 -456M31.7 642l456 -456M34.9 642l456 -456M38.1 642l456 -456M41.3 642l456 -456M44.5 642l456 -456M47.7 642l456 -456M50.9 642l456 -456M54.1 642l456 -456M57.3 642l456 -456M60.5 642l456 -456M63.7 642l456 -456M66.9 642l456 -456M70.1 642l456 -456M73.3 642l456 -456M76.5 642l456 -456M79.7 642l456 -456M82.9 642l456 -456M86.1 642l456 -456M89.3 642l456 -456M92.5 642l456 -456M95.7 642l456 -456M98.9 642l456 -456M102.1 642l456 -456M105.3 642l456 -456M108.5 642l456 -456M111.7 642l456 -456M114.9 642l456 -456M118.1 642l456 -456M121.3 642l456 -456M124.5 642l456 -456M127.7 642l456 -456M130.9 642l456 -456M134.1 642l456 -456M137.3 642l456 -456M140.5 642l456 -456M143.7 642l456 -456M146.9 642l456 -456M150.1 642l456 -456M153.3 642l456 -456M156.5 642l456 -456M159.7 642l456 -456M162.9 642l456 -456M166.1 642l456 -456M169.3 642l456 -456M172.5 642l456 -456M175.7 642l456 -456M178.9 642l456 -456M182.1 642l456 -456M185.3 642l456 -456M188.5 642l456 -456M191.7 642l456 -456M194.9 642l456 -456M198.1 642l456 -456M201.3 642l456 -456M204.5 642l456 -456M207.7 642l456 -456M210.9 642l456 -456M214.1 642l456 -456M217.3 642l456 -456M220.5 642l456 -456M223.7 642l456 -456M226.9 642l456 -456M230.1 642l456 -456M233.3 642l456 -456M236.5 642l456 -456M239.7 642l456 -456M242.9 642l456 -456M246.1 642l456 -456M249.3 642l456 -456M252.5 642l456 -456M255.7 642l456 -456M258.9 642l456 -456M262.1 642l456 -456M265.3 642l456 -456M268.5 642l456 -456M271.7 642l456 -456M274.9 642l456 -456M278.1 642l456 -456M281.3 642l456 -456M284.5 642l456 -456M287.7 642l456 -456M290.9 642l456 -456M294.1 642l456 -456M297.3 642l456 -456M300.5 642l456 -456M303.7 642l456 -456M306.9 642l456 -456M310.1 642l456 -456M313.3 642l456 -456M316.5 642l456 -456M319.7 642l456 -456M322.9 642l456 -456M326.1 642l456 -456M329.3 642l456 -456M332.5 642l456 -456M335.7 642l456 -456M338.9 642l456 -456M342.1 642l456 -456M345.3 642l456 -456M348.5 642l456 -456M351.7 642l456 -456M354.9 642l456 -456M358.1 642l456 -456M361.3 642l456 -456M364.5 642l456 -456M367.7 642l456 -456M370.9 642l456 -456M374.1 642l456 -456M377.3 642l456 -456M380.5 642l456 -456M383.7 642l456 -456M386.9 642l456 -456M390.1 642l456 -456M393.3 642l456 -456M396.5 642l456 -456M399.7 642l456 -456M402.9 642l456 -456M406.1 642l456 -456M409.3 642l456 -456M412.5 642l456 -456M415.7 642l456 -456M418.9 642l456 -456M422.1 642l456 -456M425.3 642l456 -456M428.5 642l456 -456M431.7 642l456 -456M434.9 642l456 -456M438.1 642l456 -456M441.3 642l456 -456M444.5 642l456 -456M447.7 642l456 -456M450.9 642l456 -456M454.1 642l456 -456M457.3 642l456 -456M460.5 642l456 -456M463.7 642l456 -456M466.9 642l456 -456M470.1 642l456 -456M473.3 642l456 -456M476.5 642l456 -456M479.7 642l456 -456M482.9 642l456 -456M486.1 642l456 -456M489.3 642l456 -456M492.5 642l456 -456M495.7 642l456 -456M498.9 642l456 -456M502.1 642l456 -456M505.3 642l456 -456M508.5 642l456 -456M511.7 642l456 -456M514.9 642l456 -456M518.1 642l456 -456M521.3 642l456 -456M524.5 642l456 -456M527.7 642l456 -456M530.9 642l456 -456M534.1 642l456 -456M537.3 642l456 -456M540.5 642l456 -456M543.7 642l456 -456M546.9 642l456 -456M550.1 642l456 -456M553.3 642l456 -456M556.5 642l456 -456M559.7 642l456 -456M562.9 642l456 -456M566.1 642l456 -456M569.3 642l456 -456M572.5 642l456 -456M575.7 642l456 -456M578.9 642l456 -456M582.1 642l456 -456M585.3 642l456 -456M588.5 642l456 -456M591.7 642l456 -456M594.9 642l456 -456M598.1 642l456 -456M601.3 642l456 -456M604.5 642l456 -456M607.7 642l456 -456M610.9 642l456 -456M614.1 642l456 -456M617.3 642l456 -456M620.5 642l456 -456M623.7 642l456 -456M626.9 642l456 -456M630.1 642l456 -456M633.3 642l456 -456M636.5 642l456 -456M639.7 642l456 -456M642.9 642l456 -456M646.1 642l456 -456M649.3 642l456 -456M652.5 642l456 -456M655.7 642l456 -456M658.9 642l456 -456M662.1 642l456 -456M665.3 642l456 -456M668.5 642l456 -456M671.7 642l456 -456M674.9 642l456 -456M678.1 642l456 -456M681.3 642l456 -456M684.5 642l456 -456M687.7 642l456 -456M690.9 642l456 -456M694.1 642l456 -456M697.3 642l456 -456M700.5 642l456 -456M703.7 642l456 -456M706.9 642l456 -456M710.1 642l456 -456M713.3 642l456 -456M716.5 642l456 -456M719.7 642l456 -456M722.9 642l456 -456M726.1 642l456 -456M729.3 642l456 -456M732.5 642l456 -456M735.7 642l456 -456M738.9 642l456 -456M742.1 642l456 -456M745.3 642l456 -456M748.5 642l456 -456M751.7 642l456 -456M754.9 642l456 -456M758.1 642l456 -456M761.3 642l456 -456M764.5 642l456 -456M767.7 642l456 -456M770.9 642l456 -456M774.1 642l456 -456M777.3 642l456 -456M780.5 642l456 -456M783.7 642l456 -456M786.9 642l456 -456M790.1 642l456 -456M793.3 642l456 -456M796.5 642l456 -456M799.7 642l456 -456M802.9 642l456 -456M806.1 642l456 -456M809.3 642l456 -456M812.5 642l456 -456M815.7 642l456 -456M818.9 642l456 -456M822.1 642l456 -456M825.3 642l456 -456M828.5 642l456 -456M831.7 642l456 -456M834.9 642l456 -456M838.1 642l456 -456M841.3 642l456 -456M844.5 642l456 -456M847.7 642l456 -456M850.9 642l456 -456M854.1 642l456 -456M857.3 642l456 -456M860.5 642l456 -456M863.7 642l456 -456M866.9 642l456 -456M870.1 642l456 -456M873.3 642l456 -456M876.5 642l456 -456M879.7 642l456 -456M882.9 642l456 -456M886.1 642l456 -456M889.3 642l456 -456M892.5 642l456 -456M895.7 642l456 -456M898.9 642l456 -456M902.1 642l456 -456M905.3 642l456 -456M908.5 642l456 -456M911.7 642l456 -456M914.9 642l456 -456M918.1 642l456 -456M921.3 642l456 -456M924.5 642l456 -456M927.7 642l456 -456M930.9 642l456 -456M934.1 642l456 -456M937.3 642l456 -456M940.5 642l456 -456M943.7 642l456 -456M946.9 642l456 -456M950.1 642l456 -456M953.3 642l456 -456M956.5 642l456 -456M959.7 642l456 -456M962.9 642l456 -456M966.1 642l456 -456M969.3 642l456 -456M972.5 642l456 -456M975.7 642l456 -456M978.9 642l456 -456M982.1 642l456 -456M985.3 642l456 -456M988.5 642l456 -456M991.7 642l456 -456M994.9 642l456 -456M998.1 642l456 -456M1001.3 642l456 -456M1004.5 642l456 -456M1007.7 642l456 -456M1010.9 642l456 -456M1014.1 642l456 -456M1017.3 642l456 -456M1020.5 642l456 -456M1023.7 642l456 -456M1026.9 642l456 -456M1030.1 642l456 -456M1033.3 642l456 -456M1036.5 642l456 -456M1039.7 642l456 -456M1042.9 642l456 -456M1046.1 642l456 -456M1049.3 642l456 -456M1052.5 642l456 -456M1055.7 642l456 -456M1058.9 642l456 -456M1062.1 642l456 -456M1065.3 642l456 -456M1068.5 642l456 -456M1071.7 642l456 -456M1074.9 642l456 -456M1078.1 642l456 -456M1081.3 642l456 -456M1084.5 642l456 -456M1087.7 642l456 -456M1090.9 642l456 -456M1094.1 642l456 -456M1097.3 642l456 -456M1100.5 642l456 -456M1103.7 642l456 -456M1106.9 642l456 -456M1110.1 642l456 -456M1113.3 642l456 -456M1116.5 642l456 -456M1119.7 642l456 -456M1122.9 642l456 -456M1126.1 642l456 -456M1129.3 642l456 -456M1132.5 642l456 -456M1135.7 642l456 -456M1138.9 642l456 -456M1142.1 642l456 -456M1145.3 642l456 -456" fill="none" stroke="#2a2a2a" stroke-width="0.8"/>
<path id="L2m" d="M-400.8 186l456 456M-397.6 186l456 456M-394.4 186l456 456M-391.2 186l456 456M-388 186l456 456M-384.8 186l456 456M-381.6 186l456 456M-378.4 186l456 456M-375.2 186l456 456M-372 186l456 456M-368.8 186l456 456M-365.6 186l456 456M-362.4 186l456 456M-359.2 186l456 456M-356 186l456 456M-352.8 186l456 456M-349.6 186l456 456M-346.4 186l456 456M-343.2 186l456 456M-340 186l456 456M-336.8 186l456 456M-333.6 186l456 456M-330.4 186l456 456M-327.2 186l456 456M-324 186l456 456M-320.8 186l456 456M-317.6 186l456 456M-314.4 186l456 456M-311.2 186l456 456M-308 186l456 456M-304.8 186l456 456M-301.6 186l456 456M-298.4 186l456 456M-295.2 186l456 456M-292 186l456 456M-288.8 186l456 456M-285.6 186l456 456M-282.4 186l456 456M-279.2 186l456 456M-276 186l456 456M-272.8 186l456 456M-269.6 186l456 456M-266.4 186l456 456M-263.2 186l456 456M-260 186l456 456M-256.8 186l456 456M-253.6 186l456 456M-250.4 186l456 456M-247.2 186l456 456M-244 186l456 456M-240.8 186l456 456M-237.6 186l456 456M-234.4 186l456 456M-231.2 186l456 456M-228 186l456 456M-224.8 186l456 456M-221.6 186l456 456M-218.4 186l456 456M-215.2 186l456 456M-212 186l456 456M-208.8 186l456 456M-205.6 186l456 456M-202.4 186l456 456M-199.2 186l456 456M-196 186l456 456M-192.8 186l456 456M-189.6 186l456 456M-186.4 186l456 456M-183.2 186l456 456M-180 186l456 456M-176.8 186l456 456M-173.6 186l456 456M-170.4 186l456 456M-167.2 186l456 456M-164 186l456 456M-160.8 186l456 456M-157.6 186l456 456M-154.4 186l456 456M-151.2 186l456 456M-148 186l456 456M-144.8 186l456 456M-141.6 186l456 456M-138.4 186l456 456M-135.2 186l456 456M-132 186l456 456M-128.8 186l456 456M-125.6 186l456 456M-122.4 186l456 456M-119.2 186l456 456M-116 186l456 456M-112.8 186l456 456M-109.6 186l456 456M-106.4 186l456 456M-103.2 186l456 456M-100 186l456 456M-96.8 186l456 456M-93.6 186l456 456M-90.4 186l456 456M-87.2 186l456 456M-84 186l456 456M-80.8 186l456 456M-77.6 186l456 456M-74.4 186l456 456M-71.2 186l456 456M-68 186l456 456M-64.8 186l456 456M-61.6 186l456 456M-58.4 186l456 456M-55.2 186l456 456M-52 186l456 456M-48.8 186l456 456M-45.6 186l456 456M-42.4 186l456 456M-39.2 186l456 456M-36 186l456 456M-32.8 186l456 456M-29.6 186l456 456M-26.4 186l456 456M-23.2 186l456 456M-20 186l456 456M-16.8 186l456 456M-13.6 186l456 456M-10.4 186l456 456M-7.2 186l456 456M-4 186l456 456M-0.8 186l456 456M2.4 186l456 456M5.6 186l456 456M8.8 186l456 456M12 186l456 456M15.2 186l456 456M18.4 186l456 456M21.6 186l456 456M24.8 186l456 456M28 186l456 456M31.2 186l456 456M34.4 186l456 456M37.6 186l456 456M40.8 186l456 456M44 186l456 456M47.2 186l456 456M50.4 186l456 456M53.6 186l456 456M56.8 186l456 456M60 186l456 456M63.2 186l456 456M66.4 186l456 456M69.6 186l456 456M72.8 186l456 456M76 186l456 456M79.2 186l456 456M82.4 186l456 456M85.6 186l456 456M88.8 186l456 456M92 186l456 456M95.2 186l456 456M98.4 186l456 456M101.6 186l456 456M104.8 186l456 456M108 186l456 456M111.2 186l456 456M114.4 186l456 456M117.6 186l456 456M120.8 186l456 456M124 186l456 456M127.2 186l456 456M130.4 186l456 456M133.6 186l456 456M136.8 186l456 456M140 186l456 456M143.2 186l456 456M146.4 186l456 456M149.6 186l456 456M152.8 186l456 456M156 186l456 456M159.2 186l456 456M162.4 186l456 456M165.6 186l456 456M168.8 186l456 456M172 186l456 456M175.2 186l456 456M178.4 186l456 456M181.6 186l456 456M184.8 186l456 456M188 186l456 456M191.2 186l456 456M194.4 186l456 456M197.6 186l456 456M200.8 186l456 456M204 186l456 456M207.2 186l456 456M210.4 186l456 456M213.6 186l456 456M216.8 186l456 456M220 186l456 456M223.2 186l456 456M226.4 186l456 456M229.6 186l456 456M232.8 186l456 456M236 186l456 456M239.2 186l456 456M242.4 186l456 456M245.6 186l456 456M248.8 186l456 456M252 186l456 456M255.2 186l456 456M258.4 186l456 456M261.6 186l456 456M264.8 186l456 456M268 186l456 456M271.2 186l456 456M274.4 186l456 456M277.6 186l456 456M280.8 186l456 456M284 186l456 456M287.2 186l456 456M290.4 186l456 456M293.6 186l456 456M296.8 186l456 456M300 186l456 456M303.2 186l456 456M306.4 186l456 456M309.6 186l456 456M312.8 186l456 456M316 186l456 456M319.2 186l456 456M322.4 186l456 456M325.6 186l456 456M328.8 186l456 456M332 186l456 456M335.2 186l456 456M338.4 186l456 456M341.6 186l456 456M344.8 186l456 456M348 186l456 456M351.2 186l456 456M354.4 186l456 456M357.6 186l456 456M360.8 186l456 456M364 186l456 456M367.2 186l456 456M370.4 186l456 456M373.6 186l456 456M376.8 186l456 456M380 186l456 456M383.2 186l456 456M386.4 186l456 456M389.6 186l456 456M392.8 186l456 456M396 186l456 456M399.2 186l456 456M402.4 186l456 456M405.6 186l456 456M408.8 186l456 456M412 186l456 456M415.2 186l456 456M418.4 186l456 456M421.6 186l456 456M424.8 186l456 456M428 186l456 456M431.2 186l456 456M434.4 186l456 456M437.6 186l456 456M440.8 186l456 456M444 186l456 456M447.2 186l456 456M450.4 186l456 456M453.6 186l456 456M456.8 186l456 456M460 186l456 456M463.2 186l456 456M466.4 186l456 456M469.6 186l456 456M472.8 186l456 456M476 186l456 456M479.2 186l456 456M482.4 186l456 456M485.6 186l456 456M488.8 186l456 456M492 186l456 456M495.2 186l456 456M498.4 186l456 456M501.6 186l456 456M504.8 186l456 456M508 186l456 456M511.2 186l456 456M514.4 186l456 456M517.6 186l456 456M520.8 186l456 456M524 186l456 456M527.2 186l456 456M530.4 186l456 456M533.6 186l456 456M536.8 186l456 456M540 186l456 456M543.2 186l456 456M546.4 186l456 456M549.6 186l456 456M552.8 186l456 456M556 186l456 456M559.2 186l456 456M562.4 186l456 456M565.6 186l456 456M568.8 186l456 456M572 186l456 456M575.2 186l456 456M578.4 186l456 456M581.6 186l456 456M584.8 186l456 456M588 186l456 456M591.2 186l456 456M594.4 186l456 456M597.6 186l456 456M600.8 186l456 456M604 186l456 456M607.2 186l456 456M610.4 186l456 456M613.6 186l456 456M616.8 186l456 456M620 186l456 456M623.2 186l456 456M626.4 186l456 456M629.6 186l456 456M632.8 186l456 456M636 186l456 456M639.2 186l456 456M642.4 186l456 456M645.6 186l456 456M648.8 186l456 456M652 186l456 456M655.2 186l456 456M658.4 186l456 456M661.6 186l456 456M664.8 186l456 456M668 186l456 456M671.2 186l456 456M674.4 186l456 456M677.6 186l456 456M680.8 186l456 456M684 186l456 456M687.2 186l456 456M690.4 186l456 456M693.6 186l456 456M696.8 186l456 456M700 186l456 456M703.2 186l456 456M706.4 186l456 456M709.6 186l456 456M712.8 186l456 456M716 186l456 456M719.2 186l456 456M722.4 186l456 456M725.6 186l456 456M728.8 186l456 456M732 186l456 456M735.2 186l456 456M738.4 186l456 456M741.6 186l456 456M744.8 186l456 456M748 186l456 456M751.2 186l456 456M754.4 186l456 456M757.6 186l456 456M760.8 186l456 456M764 186l456 456M767.2 186l456 456M770.4 186l456 456M773.6 186l456 456M776.8 186l456 456M780 186l456 456M783.2 186l456 456M786.4 186l456 456M789.6 186l456 456M792.8 186l456 456M796 186l456 456M799.2 186l456 456M802.4 186l456 456M805.6 186l456 456M808.8 186l456 456M812 186l456 456M815.2 186l456 456M818.4 186l456 456M821.6 186l456 456M824.8 186l456 456M828 186l456 456M831.2 186l456 456M834.4 186l456 456M837.6 186l456 456M840.8 186l456 456M844 186l456 456M847.2 186l456 456M850.4 186l456 456M853.6 186l456 456M856.8 186l456 456M860 186l456 456M863.2 186l456 456M866.4 186l456 456M869.6 186l456 456M872.8 186l456 456M876 186l456 456M879.2 186l456 456M882.4 186l456 456M885.6 186l456 456M888.8 186l456 456M892 186l456 456M895.2 186l456 456M898.4 186l456 456M901.6 186l456 456M904.8 186l456 456M908 186l456 456M911.2 186l456 456M914.4 186l456 456M917.6 186l456 456M920.8 186l456 456M924 186l456 456M927.2 186l456 456M930.4 186l456 456M933.6 186l456 456M936.8 186l456 456M940 186l456 456M943.2 186l456 456M946.4 186l456 456M949.6 186l456 456M952.8 186l456 456M956 186l456 456M959.2 186l456 456M962.4 186l456 456M965.6 186l456 456M968.8 186l456 456M972 186l456 456M975.2 186l456 456M978.4 186l456 456M981.6 186l456 456M984.8 186l456 456M988 186l456 456M991.2 186l456 456M994.4 186l456 456M997.6 186l456 456M1000.8 186l456 456M1004 186l456 456M1007.2 186l456 456M1010.4 186l456 456M1013.6 186l456 456M1016.8 186l456 456M1020 186l456 456M1023.2 186l456 456M1026.4 186l456 456M1029.6 186l456 456M1032.8 186l456 456M1036 186l456 456M1039.2 186l456 456M1042.4 186l456 456M1045.6 186l456 456M1048.8 186l456 456M1052 186l456 456M1055.2 186l456 456M1058.4 186l456 456M1061.6 186l456 456M1064.8 186l456 456M1068 186l456 456M1071.2 186l456 456M1074.4 186l456 456M1077.6 186l456 456M1080.8 186l456 456M1084 186l456 456M1087.2 186l456 456M1090.4 186l456 456M1093.6 186l456 456M1096.8 186l456 456M1100 186l456 456M1103.2 186l456 456M1106.4 186l456 456M1109.6 186l456 456M1112.8 186l456 456M1116 186l456 456M1119.2 186l456 456M1122.4 186l456 456M1125.6 186l456 456M1128.8 186l456 456M1132 186l456 456M1135.2 186l456 456M1138.4 186l456 456M1141.6 186l456 456M1144.8 186l456 456" fill="none" stroke="#2a2a2a" stroke-width="0.8"/>
<path id="L1w" d="M-400 642l456 -456M-394.4 642l456 -456M-388.8 642l456 -456M-383.2 642l456 -456M-377.6 642l456 -456M-372 642l456 -456M-366.4 642l456 -456M-360.8 642l456 -456M-355.2 642l456 -456M-349.6 642l456 -456M-344 642l456 -456M-338.4 642l456 -456M-332.8 642l456 -456M-327.2 642l456 -456M-321.6 642l456 -456M-316 642l456 -456M-310.4 642l456 -456M-304.8 642l456 -456M-299.2 642l456 -456M-293.6 642l456 -456M-288 642l456 -456M-282.4 642l456 -456M-276.8 642l456 -456M-271.2 642l456 -456M-265.6 642l456 -456M-260 642l456 -456M-254.4 642l456 -456M-248.8 642l456 -456M-243.2 642l456 -456M-237.6 642l456 -456M-232 642l456 -456M-226.4 642l456 -456M-220.8 642l456 -456M-215.2 642l456 -456M-209.6 642l456 -456M-204 642l456 -456M-198.4 642l456 -456M-192.8 642l456 -456M-187.2 642l456 -456M-181.6 642l456 -456M-176 642l456 -456M-170.4 642l456 -456M-164.8 642l456 -456M-159.2 642l456 -456M-153.6 642l456 -456M-148 642l456 -456M-142.4 642l456 -456M-136.8 642l456 -456M-131.2 642l456 -456M-125.6 642l456 -456M-120 642l456 -456M-114.4 642l456 -456M-108.8 642l456 -456M-103.2 642l456 -456M-97.6 642l456 -456M-92 642l456 -456M-86.4 642l456 -456M-80.8 642l456 -456M-75.2 642l456 -456M-69.6 642l456 -456M-64 642l456 -456M-58.4 642l456 -456M-52.8 642l456 -456M-47.2 642l456 -456M-41.6 642l456 -456M-36 642l456 -456M-30.4 642l456 -456M-24.8 642l456 -456M-19.2 642l456 -456M-13.6 642l456 -456M-8 642l456 -456M-2.4 642l456 -456M3.2 642l456 -456M8.8 642l456 -456M14.4 642l456 -456M20 642l456 -456M25.6 642l456 -456M31.2 642l456 -456M36.8 642l456 -456M42.4 642l456 -456M48 642l456 -456M53.6 642l456 -456M59.2 642l456 -456M64.8 642l456 -456M70.4 642l456 -456M76 642l456 -456M81.6 642l456 -456M87.2 642l456 -456M92.8 642l456 -456M98.4 642l456 -456M104 642l456 -456M109.6 642l456 -456M115.2 642l456 -456M120.8 642l456 -456M126.4 642l456 -456M132 642l456 -456M137.6 642l456 -456M143.2 642l456 -456M148.8 642l456 -456M154.4 642l456 -456M160 642l456 -456M165.6 642l456 -456M171.2 642l456 -456M176.8 642l456 -456M182.4 642l456 -456M188 642l456 -456M193.6 642l456 -456M199.2 642l456 -456M204.8 642l456 -456M210.4 642l456 -456M216 642l456 -456M221.6 642l456 -456M227.2 642l456 -456M232.8 642l456 -456M238.4 642l456 -456M244 642l456 -456M249.6 642l456 -456M255.2 642l456 -456M260.8 642l456 -456M266.4 642l456 -456M272 642l456 -456M277.6 642l456 -456M283.2 642l456 -456M288.8 642l456 -456M294.4 642l456 -456M300 642l456 -456M305.6 642l456 -456M311.2 642l456 -456M316.8 642l456 -456M322.4 642l456 -456M328 642l456 -456M333.6 642l456 -456M339.2 642l456 -456M344.8 642l456 -456M350.4 642l456 -456M356 642l456 -456M361.6 642l456 -456M367.2 642l456 -456M372.8 642l456 -456M378.4 642l456 -456M384 642l456 -456M389.6 642l456 -456M395.2 642l456 -456M400.8 642l456 -456M406.4 642l456 -456M412 642l456 -456M417.6 642l456 -456M423.2 642l456 -456M428.8 642l456 -456M434.4 642l456 -456M440 642l456 -456M445.6 642l456 -456M451.2 642l456 -456M456.8 642l456 -456M462.4 642l456 -456M468 642l456 -456M473.6 642l456 -456M479.2 642l456 -456M484.8 642l456 -456M490.4 642l456 -456M496 642l456 -456M501.6 642l456 -456M507.2 642l456 -456M512.8 642l456 -456M518.4 642l456 -456M524 642l456 -456M529.6 642l456 -456M535.2 642l456 -456M540.8 642l456 -456M546.4 642l456 -456M552 642l456 -456M557.6 642l456 -456M563.2 642l456 -456M568.8 642l456 -456M574.4 642l456 -456M580 642l456 -456M585.6 642l456 -456M591.2 642l456 -456M596.8 642l456 -456M602.4 642l456 -456M608 642l456 -456M613.6 642l456 -456M619.2 642l456 -456M624.8 642l456 -456M630.4 642l456 -456M636 642l456 -456M641.6 642l456 -456M647.2 642l456 -456M652.8 642l456 -456M658.4 642l456 -456M664 642l456 -456M669.6 642l456 -456M675.2 642l456 -456M680.8 642l456 -456M686.4 642l456 -456M692 642l456 -456M697.6 642l456 -456M703.2 642l456 -456M708.8 642l456 -456M714.4 642l456 -456M720 642l456 -456M725.6 642l456 -456M731.2 642l456 -456M736.8 642l456 -456M742.4 642l456 -456M748 642l456 -456M753.6 642l456 -456M759.2 642l456 -456M764.8 642l456 -456M770.4 642l456 -456M776 642l456 -456M781.6 642l456 -456M787.2 642l456 -456M792.8 642l456 -456M798.4 642l456 -456M804 642l456 -456M809.6 642l456 -456M815.2 642l456 -456M820.8 642l456 -456M826.4 642l456 -456M832 642l456 -456M837.6 642l456 -456M843.2 642l456 -456M848.8 642l456 -456M854.4 642l456 -456M860 642l456 -456M865.6 642l456 -456M871.2 642l456 -456M876.8 642l456 -456M882.4 642l456 -456M888 642l456 -456M893.6 642l456 -456M899.2 642l456 -456M904.8 642l456 -456M910.4 642l456 -456M916 642l456 -456M921.6 642l456 -456M927.2 642l456 -456M932.8 642l456 -456M938.4 642l456 -456M944 642l456 -456M949.6 642l456 -456M955.2 642l456 -456M960.8 642l456 -456M966.4 642l456 -456M972 642l456 -456M977.6 642l456 -456M983.2 642l456 -456M988.8 642l456 -456M994.4 642l456 -456M1000 642l456 -456M1005.6 642l456 -456M1011.2 642l456 -456M1016.8 642l456 -456M1022.4 642l456 -456M1028 642l456 -456M1033.6 642l456 -456M1039.2 642l456 -456M1044.8 642l456 -456M1050.4 642l456 -456M1056 642l456 -456M1061.6 642l456 -456M1067.2 642l456 -456M1072.8 642l456 -456M1078.4 642l456 -456M1084 642l456 -456M1089.6 642l456 -456M1095.2 642l456 -456M1100.8 642l456 -456M1106.4 642l456 -456M1112 642l456 -456M1117.6 642l456 -456M1123.2 642l456 -456M1128.8 642l456 -456M1134.4 642l456 -456M1140 642l456 -456M1145.6 642l456 -456" fill="none" stroke="#2a2a2a" stroke-width="0.8"/>
<path id="L2w" d="M-399 186l456 456M-393.4 186l456 456M-387.8 186l456 456M-382.2 186l456 456M-376.6 186l456 456M-371 186l456 456M-365.4 186l456 456M-359.8 186l456 456M-354.2 186l456 456M-348.6 186l456 456M-343 186l456 456M-337.4 186l456 456M-331.8 186l456 456M-326.2 186l456 456M-320.6 186l456 456M-315 186l456 456M-309.4 186l456 456M-303.8 186l456 456M-298.2 186l456 456M-292.6 186l456 456M-287 186l456 456M-281.4 186l456 456M-275.8 186l456 456M-270.2 186l456 456M-264.6 186l456 456M-259 186l456 456M-253.4 186l456 456M-247.8 186l456 456M-242.2 186l456 456M-236.6 186l456 456M-231 186l456 456M-225.4 186l456 456M-219.8 186l456 456M-214.2 186l456 456M-208.6 186l456 456M-203 186l456 456M-197.4 186l456 456M-191.8 186l456 456M-186.2 186l456 456M-180.6 186l456 456M-175 186l456 456M-169.4 186l456 456M-163.8 186l456 456M-158.2 186l456 456M-152.6 186l456 456M-147 186l456 456M-141.4 186l456 456M-135.8 186l456 456M-130.2 186l456 456M-124.6 186l456 456M-119 186l456 456M-113.4 186l456 456M-107.8 186l456 456M-102.2 186l456 456M-96.6 186l456 456M-91 186l456 456M-85.4 186l456 456M-79.8 186l456 456M-74.2 186l456 456M-68.6 186l456 456M-63 186l456 456M-57.4 186l456 456M-51.8 186l456 456M-46.2 186l456 456M-40.6 186l456 456M-35 186l456 456M-29.4 186l456 456M-23.8 186l456 456M-18.2 186l456 456M-12.6 186l456 456M-7 186l456 456M-1.4 186l456 456M4.2 186l456 456M9.8 186l456 456M15.4 186l456 456M21 186l456 456M26.6 186l456 456M32.2 186l456 456M37.8 186l456 456M43.4 186l456 456M49 186l456 456M54.6 186l456 456M60.2 186l456 456M65.8 186l456 456M71.4 186l456 456M77 186l456 456M82.6 186l456 456M88.2 186l456 456M93.8 186l456 456M99.4 186l456 456M105 186l456 456M110.6 186l456 456M116.2 186l456 456M121.8 186l456 456M127.4 186l456 456M133 186l456 456M138.6 186l456 456M144.2 186l456 456M149.8 186l456 456M155.4 186l456 456M161 186l456 456M166.6 186l456 456M172.2 186l456 456M177.8 186l456 456M183.4 186l456 456M189 186l456 456M194.6 186l456 456M200.2 186l456 456M205.8 186l456 456M211.4 186l456 456M217 186l456 456M222.6 186l456 456M228.2 186l456 456M233.8 186l456 456M239.4 186l456 456M245 186l456 456M250.6 186l456 456M256.2 186l456 456M261.8 186l456 456M267.4 186l456 456M273 186l456 456M278.6 186l456 456M284.2 186l456 456M289.8 186l456 456M295.4 186l456 456M301 186l456 456M306.6 186l456 456M312.2 186l456 456M317.8 186l456 456M323.4 186l456 456M329 186l456 456M334.6 186l456 456M340.2 186l456 456M345.8 186l456 456M351.4 186l456 456M357 186l456 456M362.6 186l456 456M368.2 186l456 456M373.8 186l456 456M379.4 186l456 456M385 186l456 456M390.6 186l456 456M396.2 186l456 456M401.8 186l456 456M407.4 186l456 456M413 186l456 456M418.6 186l456 456M424.2 186l456 456M429.8 186l456 456M435.4 186l456 456M441 186l456 456M446.6 186l456 456M452.2 186l456 456M457.8 186l456 456M463.4 186l456 456M469 186l456 456M474.6 186l456 456M480.2 186l456 456M485.8 186l456 456M491.4 186l456 456M497 186l456 456M502.6 186l456 456M508.2 186l456 456M513.8 186l456 456M519.4 186l456 456M525 186l456 456M530.6 186l456 456M536.2 186l456 456M541.8 186l456 456M547.4 186l456 456M553 186l456 456M558.6 186l456 456M564.2 186l456 456M569.8 186l456 456M575.4 186l456 456M581 186l456 456M586.6 186l456 456M592.2 186l456 456M597.8 186l456 456M603.4 186l456 456M609 186l456 456M614.6 186l456 456M620.2 186l456 456M625.8 186l456 456M631.4 186l456 456M637 186l456 456M642.6 186l456 456M648.2 186l456 456M653.8 186l456 456M659.4 186l456 456M665 186l456 456M670.6 186l456 456M676.2 186l456 456M681.8 186l456 456M687.4 186l456 456M693 186l456 456M698.6 186l456 456M704.2 186l456 456M709.8 186l456 456M715.4 186l456 456M721 186l456 456M726.6 186l456 456M732.2 186l456 456M737.8 186l456 456M743.4 186l456 456M749 186l456 456M754.6 186l456 456M760.2 186l456 456M765.8 186l456 456M771.4 186l456 456M777 186l456 456M782.6 186l456 456M788.2 186l456 456M793.8 186l456 456M799.4 186l456 456M805 186l456 456M810.6 186l456 456M816.2 186l456 456M821.8 186l456 456M827.4 186l456 456M833 186l456 456M838.6 186l456 456M844.2 186l456 456M849.8 186l456 456M855.4 186l456 456M861 186l456 456M866.6 186l456 456M872.2 186l456 456M877.8 186l456 456M883.4 186l456 456M889 186l456 456M894.6 186l456 456M900.2 186l456 456M905.8 186l456 456M911.4 186l456 456M917 186l456 456M922.6 186l456 456M928.2 186l456 456M933.8 186l456 456M939.4 186l456 456M945 186l456 456M950.6 186l456 456M956.2 186l456 456M961.8 186l456 456M967.4 186l456 456M973 186l456 456M978.6 186l456 456M984.2 186l456 456M989.8 186l456 456M995.4 186l456 456M1001 186l456 456M1006.6 186l456 456M1012.2 186l456 456M1017.8 186l456 456M1023.4 186l456 456M1029 186l456 456M1034.6 186l456 456M1040.2 186l456 456M1045.8 186l456 456M1051.4 186l456 456M1057 186l456 456M1062.6 186l456 456M1068.2 186l456 456M1073.8 186l456 456M1079.4 186l456 456M1085 186l456 456M1090.6 186l456 456M1096.2 186l456 456M1101.8 186l456 456M1107.4 186l456 456M1113 186l456 456M1118.6 186l456 456M1124.2 186l456 456M1129.8 186l456 456M1135.4 186l456 456M1141 186l456 456" fill="none" stroke="#2a2a2a" stroke-width="0.8"/></defs>
<style>
#drawing .k{fill:none;stroke:#202020;stroke-width:1.05;stroke-linejoin:round;stroke-linecap:round}
#drawing .m{fill:none;stroke:#262626;stroke-width:0.9}
#drawing .t{fill:none;stroke:#303030;stroke-width:0.85}
#drawing .c{fill:none;stroke:#3a3a3a;stroke-width:0.8;stroke-dasharray:11 1.2 1.4 1.2}
#drawing .ar{fill:#2a2a2a;stroke:none}
#drawing .tx{fill:#303030;font-style:italic;stroke:#303030;stroke-width:0.2}
#drawing .lb{fill:#34363c;font-style:italic}
#drawing .w{fill:#fff;stroke:#202020;stroke-width:1;stroke-linejoin:round}
#drawing .H1{fill:url(#h1);stroke:#262626;stroke-width:0.95;stroke-linejoin:round}
#drawing .H2{fill:url(#h2);stroke:#262626;stroke-width:0.95;stroke-linejoin:round}
#drawing .H1f{fill:url(#h1f);stroke:#262626;stroke-width:0.9;stroke-linejoin:round}
#drawing .H2f{fill:url(#h2f);stroke:#262626;stroke-width:0.9;stroke-linejoin:round}
#drawing .H1m{fill:url(#h1m);stroke:#262626;stroke-width:0.9;stroke-linejoin:round}
#drawing .H2m{fill:url(#h2m);stroke:#262626;stroke-width:0.9;stroke-linejoin:round}
#drawing .H1w{fill:url(#h1w);stroke:#262626;stroke-width:0.95;stroke-linejoin:round}
#drawing .H2w{fill:url(#h2w);stroke:#262626;stroke-width:0.95;stroke-linejoin:round}
#drawing .d{fill:#2b2b2b;stroke:#222;stroke-width:0.6}
#drawing .g{fill:#5a5a5a;stroke:#1c1c1c;stroke-width:0.9}
</style>
<g id="frame">
<rect class="m" x="58.5" y="188.5" width="627" height="450" />
<rect class="m" x="58.5" y="188.5" width="53.3" height="11.5" />
<text class="tx" font-size="6" text-anchor="middle" transform="rotate(180 85 194.7)" x="85" y="196.9" textLength="37" lengthAdjust="spacingAndGlyphs">ДМ-16.88.10.00</text>
<path class="m" d="M58.5 416.8H49.3V509.2H58.5M53.1 416.8V509.2M49.3 463.6H58.5" />
<path class="m" d="M58.5 527H49.3V638.5M53.1 527V638.5M49.3 553.9H58.5M49.3 573.2H58.5M49.3 592.4H58.5M49.3 619.3H58.5" />
<text class="tx" x="52.3" y="440" font-size="2.6" text-anchor="middle" transform="rotate(-90 52.3 440)" textLength="18" lengthAdjust="spacingAndGlyphs">Перв. примен.</text>
<text class="tx" x="52.3" y="486" font-size="2.6" text-anchor="middle" transform="rotate(-90 52.3 486)" textLength="12" lengthAdjust="spacingAndGlyphs">Справ. №</text>
<text class="tx" x="52.3" y="540.5" font-size="2.6" text-anchor="middle" transform="rotate(-90 52.3 540.5)" textLength="16" lengthAdjust="spacingAndGlyphs">Подп. и дата</text>
<text class="tx" x="52.3" y="563.5" font-size="2.6" text-anchor="middle" transform="rotate(-90 52.3 563.5)" textLength="15" lengthAdjust="spacingAndGlyphs">Инв. № дубл.</text>
<text class="tx" x="52.3" y="582.8" font-size="2.6" text-anchor="middle" transform="rotate(-90 52.3 582.8)" textLength="15" lengthAdjust="spacingAndGlyphs">Взам. инв. №</text>
<text class="tx" x="52.3" y="606" font-size="2.6" text-anchor="middle" transform="rotate(-90 52.3 606)" textLength="16" lengthAdjust="spacingAndGlyphs">Подп. и дата</text>
<text class="tx" x="52.3" y="629" font-size="2.6" text-anchor="middle" transform="rotate(-90 52.3 629)" textLength="15" lengthAdjust="spacingAndGlyphs">Инв. № подл.</text>
<text class="tx" x="47" y="573" font-size="2.5" text-anchor="middle" transform="rotate(-90 47 573)" textLength="124" lengthAdjust="spacingAndGlyphs" style="stroke-width:0.08;fill:#444">КОМПАС-3D LT V12 (некоммерческая версия) / Acrobat Distiller 9.0</text>
<text class="tx" x="50" y="641.4" font-size="2.6" text-anchor="start" textLength="40" lengthAdjust="spacingAndGlyphs" style="stroke-width:0.1">Не для коммерческого использования</text>
<path class="m" d="M543.3 638.5V596.2H685.5" />
<path class="m" d="M548.69 596.2V615.43" />
<path class="m" d="M556.38 596.2V638.5" />
<path class="m" d="M574.07 596.2V638.5" />
<path class="m" d="M585.61 596.2V638.5" />
<path class="m" d="M593.3 596.2V638.5" />
<path class="t" d="M543.3 600.05H593.3" />
<path class="t" d="M543.3 603.89H593.3" />
<path class="t" d="M543.3 607.74H593.3" />
<path class="t" d="M543.3 611.59H593.3" />
<path class="k" d="M543.3 615.43H593.3" />
<path class="k" d="M543.3 619.28H593.3" />
<path class="t" d="M543.3 623.13H593.3" />
<path class="t" d="M543.3 626.97H593.3" />
<path class="t" d="M543.3 630.82H593.3" />
<path class="t" d="M543.3 634.67H593.3" />
<path class="m" d="M593.3 607.74H685.5M593.3 626.97H685.5M647.16 607.74V638.5" />
<path class="m" d="M647.16 611.59H685.5M647.16 623.13H685.5M658.69 607.74V623.13M671.77 607.74V623.13M662.54 623.13V626.97" />
<path class="t" d="M651 611.59V623.13M654.85 611.59V623.13" />
<text class="tx" x="639.5" y="603.6" font-size="6.2" text-anchor="middle" textLength="36" lengthAdjust="spacingAndGlyphs">ДМ-16.88.10.00</text>
<text class="tx" x="620" y="615.2" font-size="6" text-anchor="middle" textLength="38.5" lengthAdjust="spacingAndGlyphs">Вал приводной</text>
<text class="tx" x="620" y="623.4" font-size="6" text-anchor="middle" textLength="47" lengthAdjust="spacingAndGlyphs">(Сборочный чертеж</text>
<text class="tx" x="653" y="610.6" font-size="2.6" text-anchor="middle" >Лит.</text>
<text class="tx" x="665" y="610.6" font-size="2.6" text-anchor="middle" >Масса</text>
<text class="tx" x="678.5" y="610.6" font-size="2.6" text-anchor="middle" textLength="11">Масштаб</text>
<text class="tx" x="678.6" y="618.6" font-size="3.6" text-anchor="middle" >1:1</text>
<text class="tx" x="655" y="625.6" font-size="2.6" text-anchor="middle" >Лист</text>
<text class="tx" x="672" y="625.6" font-size="2.6" text-anchor="middle" >Листов   1</text>
<text class="tx" x="666.5" y="630.6" font-size="2.6" text-anchor="middle" textLength="27" lengthAdjust="spacingAndGlyphs">СПбГТИ(ТУ) Кафедра</text>
<text class="tx" x="666.5" y="633.6" font-size="2.6" text-anchor="middle" textLength="31" lengthAdjust="spacingAndGlyphs">механики "Детали машин"</text>
<text class="tx" x="666.5" y="636.8" font-size="2.6" text-anchor="middle" >группа</text>
<text class="tx" x="543.9" y="614.63" font-size="2.6" text-anchor="start" textLength="11" lengthAdjust="spacingAndGlyphs">Изм. Лист</text>
<text class="tx" x="543.9" y="618.48" font-size="2.6" text-anchor="start" textLength="8" lengthAdjust="spacingAndGlyphs">Разраб.</text>
<text class="tx" x="543.9" y="622.33" font-size="2.6" text-anchor="start" textLength="6" lengthAdjust="spacingAndGlyphs">Пров.</text>
<text class="tx" x="543.9" y="626.17" font-size="2.6" text-anchor="start" textLength="8" lengthAdjust="spacingAndGlyphs">Т.контр.</text>
<text class="tx" x="543.9" y="633.87" font-size="2.6" text-anchor="start" textLength="8" lengthAdjust="spacingAndGlyphs">Н.контр.</text>
<text class="tx" x="543.9" y="637.71" font-size="2.6" text-anchor="start" textLength="5" lengthAdjust="spacingAndGlyphs">Утв.</text>
<text class="tx" x="564.8" y="614.63" font-size="2.6" text-anchor="middle" >№ докум.</text>
<text class="tx" x="579.5" y="614.63" font-size="2.6" text-anchor="middle" >Подп.</text>
<text class="tx" x="589.6" y="614.63" font-size="2.6" text-anchor="middle" >Дата</text>
<text class="tx" x="608.5" y="641.4" font-size="2.6" text-anchor="middle" textLength="13">Копировал</text>
<text class="tx" x="665.5" y="641.4" font-size="2.6" text-anchor="middle" textLength="18">Формат    А1</text>
<text class="tx" x="595.8" y="570" font-size="4.2" text-anchor="middle" textLength="45" lengthAdjust="spacingAndGlyphs">Технические требования</text>
<text class="tx" x="543.8" y="581.2" font-size="4.2" text-anchor="start" textLength="104" lengthAdjust="spacingAndGlyphs">В полости корпусов подшипников заложить пластичную</text>
<text class="tx" x="543.8" y="587" font-size="4.2" text-anchor="start" textLength="69.6" lengthAdjust="spacingAndGlyphs">смазку "Литол-24" по ГОСТ 21150-87</text>
</g>
<g id="topview">
<path class="k" d="M182 298.9H99.7L98.7 299.9V336.1L99.7 337.1H182" />
<path class="t" d="M99.9 298.9L99.9 337.1"/>
<path class="k" d="M110.3 312.6H177V323.4H110.3A5.4 5.4 0 0 1 110.3 312.6Z" />
<path class="k" d="M253 291.4H371.4M253 344.6H371.4M429 291.4H582M429 344.6H582" />
<path class="t" d="M258 291.4V344.6M259.6 291.4V344.6" />
<path class="c" d="M93 318L646 318"/>
<clipPath id="c1"><path d="M197.3 268.3V248.7Q197.3 246.7 199.3 246.7H207.3Q209.8 246.7 209.8 249.2V256.5Q209.8 259 212.3 259H233.9Q236.4 259 236.4 256.5V249.2Q236.4 246.7 238.9 246.7H246.4Q248.4 246.7 248.4 248.7V268.3Z"/></clipPath><path d="M197.3 268.3V248.7Q197.3 246.7 199.3 246.7H207.3Q209.8 246.7 209.8 249.2V256.5Q209.8 259 212.3 259H233.9Q236.4 259 236.4 256.5V249.2Q236.4 246.7 238.9 246.7H246.4Q248.4 246.7 248.4 248.7V268.3Z" fill="#fff"/><use href="#L1" clip-path="url(#c1)"/><path class="k" d="M197.3 268.3V248.7Q197.3 246.7 199.3 246.7H207.3Q209.8 246.7 209.8 249.2V256.5Q209.8 259 212.3 259H233.9Q236.4 259 236.4 256.5V249.2Q236.4 246.7 238.9 246.7H246.4Q248.4 246.7 248.4 248.7V268.3Z"/>
<clipPath id="c2"><path d="M191.4 249.2Q191.4 246.7 193.9 246.7H197.3V268.3H208.4V283H199.9V290.6H192.9V268.3H191.4Z"/></clipPath><path d="M191.4 249.2Q191.4 246.7 193.9 246.7H197.3V268.3H208.4V283H199.9V290.6H192.9V268.3H191.4Z" fill="#fff"/><use href="#L2f" clip-path="url(#c2)"/><path class="k" d="M191.4 249.2Q191.4 246.7 193.9 246.7H197.3V268.3H208.4V283H199.9V290.6H192.9V268.3H191.4Z"/>
<clipPath id="c3"><path d="M254.8 249.2Q254.8 246.7 252.3 246.7H248.4V268.3H238.4V283H246.9V290.6H253.3V268.3H254.8Z"/></clipPath><path d="M254.8 249.2Q254.8 246.7 252.3 246.7H248.4V268.3H238.4V283H246.9V290.6H253.3V268.3H254.8Z" fill="#fff"/><use href="#L1f" clip-path="url(#c3)"/><path class="k" d="M254.8 249.2Q254.8 246.7 252.3 246.7H248.4V268.3H238.4V283H246.9V290.6H253.3V268.3H254.8Z"/>
<clipPath id="c4"><path d="M211.2 268.3h24.4v6.3h-24.4Z"/></clipPath><path d="M211.2 268.3h24.4v6.3h-24.4Z" fill="#fff"/><use href="#L1m" clip-path="url(#c4)"/><path class="k" d="M211.2 268.3h24.4v6.3h-24.4Z"/>
<clipPath id="c5"><path d="M211.2 288.2h24.4v6.6h-24.4Z"/></clipPath><path d="M211.2 288.2h24.4v6.6h-24.4Z" fill="#fff"/><use href="#L2m" clip-path="url(#c5)"/><path class="k" d="M211.2 288.2h24.4v6.6h-24.4Z"/>
<rect class="w" x="211.2" y="274.6" width="24.4" height="13.6" />
<path class="k" d="M223.4 268.3L223.4 294.8"/>
<circle class="w" cx="217.4" cy="281.6" r="5.6" />
<path class="t" d="M212.8 280.4L222 282.8"/>
<path class="t" d="M218.2 276.6L216.6 286.6"/>
<circle class="w" cx="229.4" cy="281.6" r="5.6" />
<path class="t" d="M224.8 280.4L234 282.8"/>
<path class="t" d="M230.2 276.6L228.6 286.6"/>
<rect class="g" x="207.8" y="269" width="3.4" height="4.8" />
<rect class="g" x="235.6" y="269" width="3.4" height="4.8" />
<rect class="d" x="200.8" y="283" width="7" height="7.6" />
<rect class="w" x="203" y="285.4" width="3.8" height="3" />
<rect class="d" x="239" y="283" width="7" height="7.6" />
<rect class="w" x="240.2" y="285.4" width="3.8" height="3" />
<rect class="w" x="187.4" y="268.8" width="4" height="14.8" />
<path class="t" d="M187.4 273.7L191.4 273.7"/>
<path class="t" d="M187.4 278.7L191.4 278.7"/>
<rect class="w" x="254.8" y="269.4" width="7.6" height="13.6" />
<path class="t" d="M254.8 273.9L262.4 273.9"/>
<path class="t" d="M254.8 278.5L262.4 278.5"/>
<path class="k" d="M262.4 272.8H265.4L266.4 273.8V278.6L265.4 279.6H262.4" fill="#bbb"/>
<path class="t" d="M184.4 276.2L268.8 276.2"/>
<clipPath id="c6"><path d="M197.3 367.7H248.4V389.6L247.4 390V392.5L245.9 394H242.2V392.4H237.2V380.9Q237.2 377.4 233.7 377.4H212.3Q208.8 377.4 208.8 380.9V392.4H203.8V394H199.8L198.3 392.5V390L197.3 389.6Z"/></clipPath><path d="M197.3 367.7H248.4V389.6L247.4 390V392.5L245.9 394H242.2V392.4H237.2V380.9Q237.2 377.4 233.7 377.4H212.3Q208.8 377.4 208.8 380.9V392.4H203.8V394H199.8L198.3 392.5V390L197.3 389.6Z" fill="#fff"/><use href="#L1" clip-path="url(#c6)"/><path class="k" d="M197.3 367.7H248.4V389.6L247.4 390V392.5L245.9 394H242.2V392.4H237.2V380.9Q237.2 377.4 233.7 377.4H212.3Q208.8 377.4 208.8 380.9V392.4H203.8V394H199.8L198.3 392.5V390L197.3 389.6Z"/>
<clipPath id="c7"><path d="M191.4 387.1Q191.4 389.6 193.9 389.6H197.3V367.7H208.4V353H199.9V345.4H192.9V367.7H191.4Z"/></clipPath><path d="M191.4 387.1Q191.4 389.6 193.9 389.6H197.3V367.7H208.4V353H199.9V345.4H192.9V367.7H191.4Z" fill="#fff"/><use href="#L2f" clip-path="url(#c7)"/><path class="k" d="M191.4 387.1Q191.4 389.6 193.9 389.6H197.3V367.7H208.4V353H199.9V345.4H192.9V367.7H191.4Z"/>
<clipPath id="c8"><path d="M254.8 387.1Q254.8 389.6 252.3 389.6H248.4V367.7H238.4V353H246.9V345.4H253.3V367.7H254.8Z"/></clipPath><path d="M254.8 387.1Q254.8 389.6 252.3 389.6H248.4V367.7H238.4V353H246.9V345.4H253.3V367.7H254.8Z" fill="#fff"/><use href="#L1f" clip-path="url(#c8)"/><path class="k" d="M254.8 387.1Q254.8 389.6 252.3 389.6H248.4V367.7H238.4V353H246.9V345.4H253.3V367.7H254.8Z"/>
<clipPath id="c9"><path d="M211.2 361.4h24.4v6.3h-24.4Z"/></clipPath><path d="M211.2 361.4h24.4v6.3h-24.4Z" fill="#fff"/><use href="#L1m" clip-path="url(#c9)"/><path class="k" d="M211.2 361.4h24.4v6.3h-24.4Z"/>
<clipPath id="c10"><path d="M211.2 341.2h24.4v6.6h-24.4Z"/></clipPath><path d="M211.2 341.2h24.4v6.6h-24.4Z" fill="#fff"/><use href="#L2m" clip-path="url(#c10)"/><path class="k" d="M211.2 341.2h24.4v6.6h-24.4Z"/>
<rect class="w" x="211.2" y="347.8" width="24.4" height="13.6" />
<path class="k" d="M223.4 367.7L223.4 341.2"/>
<circle class="w" cx="217.4" cy="354.4" r="5.6" />
<path class="t" d="M212.8 355.6L222 353.2"/>
<path class="t" d="M216.6 349.4L218.2 359.4"/>
<circle class="w" cx="229.4" cy="354.4" r="5.6" />
<path class="t" d="M224.8 355.6L234 353.2"/>
<path class="t" d="M228.6 349.4L230.2 359.4"/>
<rect class="g" x="207.8" y="362.2" width="3.4" height="4.8" />
<rect class="g" x="235.6" y="362.2" width="3.4" height="4.8" />
<rect class="d" x="200.8" y="345.4" width="7" height="7.6" />
<rect class="w" x="203" y="347.6" width="3.8" height="3" />
<rect class="d" x="239" y="345.4" width="7" height="7.6" />
<rect class="w" x="240.2" y="347.6" width="3.8" height="3" />
<rect class="w" x="187.4" y="352.4" width="4" height="14.8" />
<path class="t" d="M187.4 357.3L191.4 357.3"/>
<path class="t" d="M187.4 362.3L191.4 362.3"/>
<rect class="w" x="254.8" y="353" width="7.6" height="13.6" />
<path class="t" d="M254.8 357.5L262.4 357.5"/>
<path class="t" d="M254.8 362.1L262.4 362.1"/>
<path class="k" d="M262.4 356.4H265.4L266.4 357.4V362.2L265.4 363.2H262.4" fill="#bbb"/>
<path class="t" d="M184.4 359.8L268.8 359.8"/>
<path class="t" d="M223.4 255L223.4 384"/>
<clipPath id="c11"><path d="M182.3 291.4h29.2v3.4h-29.2Z"/></clipPath><path d="M182.3 291.4h29.2v3.4h-29.2Z" fill="#fff"/><use href="#L2f" clip-path="url(#c11)"/><path class="k" d="M182.3 291.4h29.2v3.4h-29.2Z"/>
<clipPath id="c12"><path d="M182.3 341.2h29.2v3.4h-29.2Z"/></clipPath><path d="M182.3 341.2h29.2v3.4h-29.2Z" fill="#fff"/><use href="#L2f" clip-path="url(#c12)"/><path class="k" d="M182.3 341.2h29.2v3.4h-29.2Z"/>
<path class="k" d="M182.3 291.4V344.6M211.5 294.8V341.2M230.4 294.8V341.2M236 294.8V341.2M253 291.4V344.6" />
<path class="t" d="M190 294.8V341.2M224.4 294.8V341.2" />
<path class="t" d="M177.6 268.3L177.6 367.7"/>
<path class="ar" d="M177.6 367.7L176.75 363.1L178.45 363.1Z"/>
<path class="ar" d="M177.6 268.3L178.45 272.9L176.75 272.9Z"/>
<path class="t" d="M196.4 294.8L196.4 341.2"/>
<path class="ar" d="M196.4 341.2L195.55 336.6L197.25 336.6Z"/>
<path class="ar" d="M196.4 294.8L197.25 299.4L195.55 299.4Z"/>
<path class="t" d="M201.6 291.4L201.6 344.6"/>
<path class="ar" d="M201.6 344.6L200.75 340L202.45 340Z"/>
<path class="ar" d="M201.6 291.4L202.45 296L200.75 296Z"/>
<path class="t" d="M217 294.8L217 341.2"/>
<path class="ar" d="M217 341.2L216.15 336.6L217.85 336.6Z"/>
<path class="ar" d="M217 294.8L217.85 299.4L216.15 299.4Z"/>
<path class="t" d="M243.6 291.4L243.6 344.6"/>
<path class="ar" d="M243.6 344.6L242.75 340L244.45 340Z"/>
<path class="ar" d="M243.6 291.4L244.45 296L242.75 296Z"/>
<path class="t" d="M248.8 291.4L248.8 344.6"/>
<path class="ar" d="M248.8 344.6L247.95 340L249.65 340Z"/>
<path class="ar" d="M248.8 291.4L249.65 296L247.95 296Z"/>
<path class="t" d="M176 268.3L191.4 268.3"/>
<path class="t" d="M176 367.7L191.4 367.7"/>
<text class="tx" x="175.6" y="323" font-size="4.1" text-anchor="middle" transform="rotate(-84 175.6 323)" textLength="22" lengthAdjust="spacingAndGlyphs">ø100H7/h8</text>
<text class="tx" x="194.4" y="323" font-size="4.1" text-anchor="middle" transform="rotate(-84 194.4 323)" textLength="22" lengthAdjust="spacingAndGlyphs">ø40D9/k6</text>
<text class="tx" x="199.8" y="323" font-size="4.1" text-anchor="middle" transform="rotate(-84 199.8 323)" textLength="15" lengthAdjust="spacingAndGlyphs">ø70 H7</text>
<text class="tx" x="215.2" y="323" font-size="4.1" text-anchor="middle" transform="rotate(-84 215.2 323)" textLength="15" lengthAdjust="spacingAndGlyphs">ø40 k6</text>
<text class="tx" x="241.8" y="323" font-size="4.1" text-anchor="middle" transform="rotate(-84 241.8 323)" textLength="15" lengthAdjust="spacingAndGlyphs">ø70 H7</text>
<text class="tx" x="247" y="323" font-size="4.1" text-anchor="middle" transform="rotate(-84 247 323)" textLength="15" lengthAdjust="spacingAndGlyphs">ø45 h8</text>
<path d="M141.2 281.4V280.2H146.4V281.4M142.1 280.2Q142.9 276.4 144.12 272.6H146.33L145.4 280.2" fill="none" stroke="#34363c" stroke-width="0.85"/>
<path class="k" d="M141 283.4H152.4M152.4 280.6V290.1" />
<path class="ar" d="M152.4 283.4L146.8 284.55L146.8 282.25Z"/>
<path d="M141.2 360.4V359.2H146.4V360.4M142.1 359.2Q142.9 355.4 144.12 351.6H146.33L145.4 359.2" fill="none" stroke="#34363c" stroke-width="0.85"/>
<path class="k" d="M141 350.1H152.4M152.4 343.3V352.9" />
<path class="ar" d="M152.4 350.1L146.8 351.25L146.8 348.95Z"/>
<clipPath id="c13"><path d="M581.2 268.3V248.7Q581.2 246.7 583.2 246.7H591.1Q593.6 246.7 593.6 249.2V256.5Q593.6 259 596.1 259H617.7Q620.2 259 620.2 256.5V249.2Q620.2 246.7 622.7 246.7H630.6Q632.6 246.7 632.6 248.7V268.3Z"/></clipPath><path d="M581.2 268.3V248.7Q581.2 246.7 583.2 246.7H591.1Q593.6 246.7 593.6 249.2V256.5Q593.6 259 596.1 259H617.7Q620.2 259 620.2 256.5V249.2Q620.2 246.7 622.7 246.7H630.6Q632.6 246.7 632.6 248.7V268.3Z" fill="#fff"/><use href="#L2" clip-path="url(#c13)"/><path class="k" d="M581.2 268.3V248.7Q581.2 246.7 583.2 246.7H591.1Q593.6 246.7 593.6 249.2V256.5Q593.6 259 596.1 259H617.7Q620.2 259 620.2 256.5V249.2Q620.2 246.7 622.7 246.7H630.6Q632.6 246.7 632.6 248.7V268.3Z"/>
<clipPath id="c14"><path d="M575.3 249.2Q575.3 246.7 577.8 246.7H581.2V268.3H592.2V283H583.7V290.6H576.8V268.3H575.3Z"/></clipPath><path d="M575.3 249.2Q575.3 246.7 577.8 246.7H581.2V268.3H592.2V283H583.7V290.6H576.8V268.3H575.3Z" fill="#fff"/><use href="#L2f" clip-path="url(#c14)"/><path class="k" d="M575.3 249.2Q575.3 246.7 577.8 246.7H581.2V268.3H592.2V283H583.7V290.6H576.8V268.3H575.3Z"/>
<clipPath id="c15"><path d="M639 249.2Q639 246.7 636.5 246.7H632.6V268.3H623.2V272Q625.2 275 630.6 275.4Q632.6 275.4 632.6 278V318H639Z"/></clipPath><path d="M639 249.2Q639 246.7 636.5 246.7H632.6V268.3H623.2V272Q625.2 275 630.6 275.4Q632.6 275.4 632.6 278V318H639Z" fill="#fff"/><use href="#L1f" clip-path="url(#c15)"/><path class="k" d="M639 249.2Q639 246.7 636.5 246.7H632.6V268.3H623.2V272Q625.2 275 630.6 275.4Q632.6 275.4 632.6 278V318H639Z"/>
<clipPath id="c16"><path d="M595 268.3h24.4v6.3h-24.4Z"/></clipPath><path d="M595 268.3h24.4v6.3h-24.4Z" fill="#fff"/><use href="#L1m" clip-path="url(#c16)"/><path class="k" d="M595 268.3h24.4v6.3h-24.4Z"/>
<clipPath id="c17"><path d="M595 288.2h24.4v6.6h-24.4Z"/></clipPath><path d="M595 288.2h24.4v6.6h-24.4Z" fill="#fff"/><use href="#L2m" clip-path="url(#c17)"/><path class="k" d="M595 288.2h24.4v6.6h-24.4Z"/>
<rect class="w" x="595" y="274.6" width="24.4" height="13.6" />
<path class="k" d="M607.2 268.3L607.2 294.8"/>
<circle class="w" cx="601.2" cy="281.6" r="5.6" />
<path class="t" d="M596.6 280.4L605.8 282.8"/>
<path class="t" d="M602 276.6L600.4 286.6"/>
<circle class="w" cx="613.2" cy="281.6" r="5.6" />
<path class="t" d="M608.6 280.4L617.8 282.8"/>
<path class="t" d="M614 276.6L612.4 286.6"/>
<rect class="g" x="591.6" y="269" width="3.4" height="4.8" />
<rect class="g" x="619.4" y="269" width="3.4" height="4.8" />
<rect class="d" x="584.6" y="283" width="7" height="7.6" />
<rect class="w" x="586.8" y="285.4" width="3.8" height="3" />
<rect class="w" x="639" y="269.4" width="3.6" height="13.6" />
<path class="t" d="M639 273.9L642.6 273.9"/>
<path class="t" d="M639 278.5L642.6 278.5"/>
<rect class="w" x="565.9" y="268.6" width="9.4" height="15.2" />
<path class="t" d="M565.9 273.7L575.3 273.7"/>
<path class="t" d="M565.9 278.7L575.3 278.7"/>
<path class="k" d="M565.9 272.6H563.9L562.9 273.6V278.8L563.9 279.8H565.9" />
<path class="t" d="M560.3 276.2L647 276.2"/>
<clipPath id="c18"><path d="M581.2 367.7H632.6V389.6L631.6 390V392.5L630.1 394H626V392.4H621V380.9Q621 377.4 617.5 377.4H596.1Q592.6 377.4 592.6 380.9V392.4H587.6V394H583.7L582.2 392.5V390L581.2 389.6Z"/></clipPath><path d="M581.2 367.7H632.6V389.6L631.6 390V392.5L630.1 394H626V392.4H621V380.9Q621 377.4 617.5 377.4H596.1Q592.6 377.4 592.6 380.9V392.4H587.6V394H583.7L582.2 392.5V390L581.2 389.6Z" fill="#fff"/><use href="#L2" clip-path="url(#c18)"/><path class="k" d="M581.2 367.7H632.6V389.6L631.6 390V392.5L630.1 394H626V392.4H621V380.9Q621 377.4 617.5 377.4H596.1Q592.6 377.4 592.6 380.9V392.4H587.6V394H583.7L582.2 392.5V390L581.2 389.6Z"/>
<clipPath id="c19"><path d="M575.3 387.1Q575.3 389.6 577.8 389.6H581.2V367.7H592.2V353H583.7V345.4H576.8V367.7H575.3Z"/></clipPath><path d="M575.3 387.1Q575.3 389.6 577.8 389.6H581.2V367.7H592.2V353H583.7V345.4H576.8V367.7H575.3Z" fill="#fff"/><use href="#L2f" clip-path="url(#c19)"/><path class="k" d="M575.3 387.1Q575.3 389.6 577.8 389.6H581.2V367.7H592.2V353H583.7V345.4H576.8V367.7H575.3Z"/>
<clipPath id="c20"><path d="M639 387.1Q639 389.6 636.5 389.6H632.6V367.7H623.2V364Q625.2 361 630.6 360.6Q632.6 360.6 632.6 358V318H639Z"/></clipPath><path d="M639 387.1Q639 389.6 636.5 389.6H632.6V367.7H623.2V364Q625.2 361 630.6 360.6Q632.6 360.6 632.6 358V318H639Z" fill="#fff"/><use href="#L1f" clip-path="url(#c20)"/><path class="k" d="M639 387.1Q639 389.6 636.5 389.6H632.6V367.7H623.2V364Q625.2 361 630.6 360.6Q632.6 360.6 632.6 358V318H639Z"/>
<clipPath id="c21"><path d="M595 361.4h24.4v6.3h-24.4Z"/></clipPath><path d="M595 361.4h24.4v6.3h-24.4Z" fill="#fff"/><use href="#L1m" clip-path="url(#c21)"/><path class="k" d="M595 361.4h24.4v6.3h-24.4Z"/>
<clipPath id="c22"><path d="M595 341.2h24.4v6.6h-24.4Z"/></clipPath><path d="M595 341.2h24.4v6.6h-24.4Z" fill="#fff"/><use href="#L2m" clip-path="url(#c22)"/><path class="k" d="M595 341.2h24.4v6.6h-24.4Z"/>
<rect class="w" x="595" y="347.8" width="24.4" height="13.6" />
<path class="k" d="M607.2 367.7L607.2 341.2"/>
<circle class="w" cx="601.2" cy="354.4" r="5.6" />
<path class="t" d="M596.6 355.6L605.8 353.2"/>
<path class="t" d="M600.4 349.4L602 359.4"/>
<circle class="w" cx="613.2" cy="354.4" r="5.6" />
<path class="t" d="M608.6 355.6L617.8 353.2"/>
<path class="t" d="M612.4 349.4L614 359.4"/>
<rect class="g" x="591.6" y="362.2" width="3.4" height="4.8" />
<rect class="g" x="619.4" y="362.2" width="3.4" height="4.8" />
<rect class="d" x="584.6" y="345.4" width="7" height="7.6" />
<rect class="w" x="586.8" y="347.6" width="3.8" height="3" />
<rect class="w" x="639" y="353" width="3.6" height="13.6" />
<path class="t" d="M639 357.5L642.6 357.5"/>
<path class="t" d="M639 362.1L642.6 362.1"/>
<rect class="w" x="565.9" y="352.2" width="9.4" height="15.2" />
<path class="t" d="M565.9 357.3L575.3 357.3"/>
<path class="t" d="M565.9 362.3L575.3 362.3"/>
<path class="k" d="M565.9 356.2H563.9L562.9 357.2V362.4L563.9 363.4H565.9" />
<path class="t" d="M560.3 359.8L647 359.8"/>
<path class="t" d="M607.2 255L607.2 384"/>
<path class="k" d="M582 291.4V344.6M588.4 291.4V344.6M595 294.8V341.2" />
<clipPath id="c23"><path d="M599.8 295.6H619V328.5Q609 335 599.8 328.5Z"/></clipPath><path d="M599.8 295.6H619V328.5Q609 335 599.8 328.5Z" fill="#fff"/><use href="#L1m" clip-path="url(#c23)"/><path class="k" d="M599.8 295.6H619V328.5Q609 335 599.8 328.5Z"/>
<path class="k" d="M599.8 328.5V341.3H619V328.5" />
<clipPath id="c24"><path d="M619 292h4.6v53h-4.6Z"/></clipPath><path d="M619 292h4.6v53h-4.6Z" fill="#fff"/><use href="#L2f" clip-path="url(#c24)"/><path class="k" d="M619 292h4.6v53h-4.6Z"/>
<rect class="w" x="603.5" y="315.5" width="20.5" height="5.4" />
<path class="t" d="M606 315.5L606 320.9"/>
<path class="t" d="M609 315.5L609 320.9"/>
<path class="t" d="M611.4 315.5L611.4 320.9"/>
<path class="t" d="M613.8 315.5L613.8 320.9"/>
<path class="t" d="M616.2 315.5L616.2 320.9"/>
<rect class="w" x="623.6" y="312.6" width="5.6" height="11.4" />
<path class="t" d="M623.6 316.4L629.2 316.4"/>
<path class="t" d="M623.6 320.2L629.2 320.2"/>
<path class="d" d="M604.4 297.2H621.6V299.8H604.4Z" />
<path class="t" d="M585.4 291.4L585.4 344.6"/>
<path class="ar" d="M585.4 344.6L584.55 340L586.25 340Z"/>
<path class="ar" d="M585.4 291.4L586.25 296L584.55 296Z"/>
<path class="t" d="M591.4 291.4L591.4 344.6"/>
<path class="ar" d="M591.4 344.6L590.55 340L592.25 340Z"/>
<path class="ar" d="M591.4 291.4L592.25 296L590.55 296Z"/>
<path class="t" d="M607.3 300L607.3 341"/>
<path class="ar" d="M607.3 341L606.45 336.4L608.15 336.4Z"/>
<path class="ar" d="M607.3 300L608.15 304.6L606.45 304.6Z"/>
<path class="t" d="M649.3 268.3L649.3 367.7"/>
<path class="ar" d="M649.3 367.7L648.45 363.1L650.15 363.1Z"/>
<path class="ar" d="M649.3 268.3L650.15 272.9L648.45 272.9Z"/>
<path class="t" d="M639 268.3L651 268.3"/>
<path class="t" d="M639 367.7L651 367.7"/>
<text class="tx" x="577.6" y="324" font-size="4.1" text-anchor="middle" transform="rotate(-84 577.6 324)" textLength="16" lengthAdjust="spacingAndGlyphs">ø45 h8</text>
<text class="tx" x="589.6" y="324" font-size="4.1" text-anchor="middle" transform="rotate(-84 589.6 324)" textLength="16" lengthAdjust="spacingAndGlyphs">ø70 H7</text>
<text class="tx" x="604.2" y="324" font-size="4.1" text-anchor="middle" transform="rotate(-84 604.2 324)" textLength="14" lengthAdjust="spacingAndGlyphs">ø60 k6</text>
<text class="tx" x="647.4" y="310" font-size="4.1" text-anchor="middle" transform="rotate(-84 647.4 310)" textLength="22" lengthAdjust="spacingAndGlyphs">ø100H7/h8</text>
<text class="lb" font-size="10.2" text-anchor="middle" transform="translate(616.4 237.4) scale(0.64 1)">И</text>
<path class="k" d="M607.2 239.9H618.7M607.2 236.6V246" />
<path class="ar" d="M607.2 239.9L612.8 238.75L612.8 241.05Z"/>
<text class="lb" font-size="10.2" text-anchor="middle" transform="translate(616.4 413) scale(0.64 1)">И</text>
<path class="k" d="M607.2 406.4H618.7M607.2 401V409.6" />
<path class="ar" d="M607.2 406.4L612.8 405.25L612.8 407.55Z"/>
<path class="t" d="M607.2 381L607.2 409"/>
<text class="lb" font-size="10" text-anchor="middle" transform="translate(673.2 314) scale(0.66 1)">А</text>
<path class="k" d="M664.8 318.4H676.2" />
<path class="ar" d="M664.8 318.4L670.4 317.25L670.4 319.55Z"/>
<clipPath id="c25"><path d="M409.4 211.4V269.4Q409.4 280.4 398 280.4H374.4Q371.4 280.4 371.4 283.4V291.4H421.4V211.4Z"/></clipPath><path d="M409.4 211.4V269.4Q409.4 280.4 398 280.4H374.4Q371.4 280.4 371.4 283.4V291.4H421.4V211.4Z" fill="#fff"/><use href="#L2w" clip-path="url(#c25)"/><path class="k" d="M409.4 211.4V269.4Q409.4 280.4 398 280.4H374.4Q371.4 280.4 371.4 283.4V291.4H421.4V211.4Z"/>
<path class="t" d="M409.4 211.4V198.6L410.8 197.1H420L421.4 198.6V211.4M409.4 207.5H421.4" />
<path class="t" d="M414.6 193L414.6 291.4"/>
<clipPath id="c26"><path d="M371.4 344.6V352Q371.4 355 374.4 355.2L405 359.8Q409.4 360.6 409.4 365V381.5Q415 380 421.4 381.5V344.6Z"/></clipPath><path d="M371.4 344.6V352Q371.4 355 374.4 355.2L405 359.8Q409.4 360.6 409.4 365V381.5Q415 380 421.4 381.5V344.6Z" fill="#fff"/><use href="#L2w" clip-path="url(#c26)"/><path class="k" d="M371.4 344.6V352Q371.4 355 374.4 355.2L405 359.8Q409.4 360.6 409.4 365V381.5Q415 380 421.4 381.5V344.6Z"/>
<path class="t" d="M414.6 344.6L414.6 404"/>
<path class="k" d="M421.4 287.6H429V349.4H421.4" />
<path class="k" d="M371.4 291.4V344.6M414.2 291.4V344.6M417.4 291.4V344.6M421.4 291.4V344.6" />
<path class="t" d="M385.2 299L385.2 344.6"/>
<path class="k" d="M371.4 291.4H421.4M371.4 344.6H421.4" />
<path class="k" d="M385 310.2H407A7.8 7.8 0 0 1 407 325.8H385A7.8 7.8 0 0 1 385 310.2Z" />
<clipPath id="c27"><path d="M379.8 291.4H399.9V294.2Q397.6 299.2 391.6 299.2H388Q382 299.2 379.8 294.2Z"/></clipPath><path d="M379.8 291.4H399.9V294.2Q397.6 299.2 391.6 299.2H388Q382 299.2 379.8 294.2Z" fill="#fff"/><use href="#L1m" clip-path="url(#c27)"/><path class="k" d="M379.8 291.4H399.9V294.2Q397.6 299.2 391.6 299.2H388Q382 299.2 379.8 294.2Z"/>
<rect class="w" x="384.3" y="264.2" width="11.7" height="6.5" />
<path class="t" d="M387.4 264.2L387.4 270.7"/>
<path class="t" d="M392.9 264.2L392.9 270.7"/>
<rect class="w" x="386.9" y="270.7" width="6.5" height="2.6" />
<rect class="w" x="382.4" y="273.3" width="15.6" height="7.1" />
<path class="t" d="M386.6 273.3L386.6 280.4"/>
<path class="t" d="M393.8 273.3L393.8 280.4"/>
<path class="w" d="M386.9 280.4V292.4L388.4 293.6H391.9L393.4 292.4V280.4" />
<path class="t" d="M390.2 260.6L390.2 296"/>
<path class="t" d="M355.6 326.4V197.1H421.4" />
<path class="ar" d="M355.6 197.1L356.45 201.7L354.75 201.7Z"/>
<path class="t" d="M363.2 326.4V207.5H423" />
<path class="ar" d="M363.2 207.5L364.05 212.1L362.35 212.1Z"/>
<text class="tx" x="352.8" y="311.4" font-size="4.1" text-anchor="middle" transform="rotate(-84 352.8 311.4)" textLength="9">ø316</text>
<text class="tx" x="360.4" y="311.4" font-size="4.1" text-anchor="middle" transform="rotate(-84 360.4 311.4)" textLength="9">ø288</text>
<path class="t" d="M374.6 291.4L374.6 344.6"/>
<path class="ar" d="M374.6 344.6L373.75 340L375.45 340Z"/>
<path class="ar" d="M374.6 291.4L375.45 296L373.75 296Z"/>
<path class="t" d="M407.6 291.4L407.6 344.6"/>
<path class="ar" d="M407.6 344.6L406.75 340L408.45 340Z"/>
<path class="ar" d="M407.6 291.4L408.45 296L406.75 296Z"/>
<text class="tx" x="372.6" y="322" font-size="4.1" text-anchor="middle" transform="rotate(-84 372.6 322)" textLength="22" lengthAdjust="spacingAndGlyphs">ø70 H7/p6</text>
<text class="tx" x="405.4" y="322" font-size="4.1" text-anchor="middle" transform="rotate(-84 405.4 322)" textLength="22" lengthAdjust="spacingAndGlyphs">ø70 H7/js6</text>
<text class="lb" font-size="10.2" text-anchor="middle" transform="translate(388.6 248.4) scale(0.62 1)">Е</text>
<path class="k" d="M385.5 250.9H397.6M397.6 249V258.5" />
<path class="ar" d="M397.6 250.9L392 252.05L392 249.75Z"/>
<text class="lb" font-size="10.2" text-anchor="middle" transform="translate(388.8 382.4) scale(0.62 1)">Е</text>
<path class="k" d="M385.5 372.8H398.2M398.2 366V375.7" />
<path class="ar" d="M398.2 372.8L392.6 373.95L392.6 371.65Z"/>
<path class="m" d="M421.6 253.5L438.4 244.4H497.6" />
<path class="ar" d="M421.6 253.5L425.05 250.66L425.83 252.05Z"/>
<text class="tx" x="439.4" y="242.6" font-size="4" text-anchor="start" textLength="56" lengthAdjust="spacingAndGlyphs">z = 7, P = 126 mm ГОСТ 592-81</text>
<text class="tx" x="439.4" y="249.6" font-size="4" text-anchor="start" textLength="32" lengthAdjust="spacingAndGlyphs">Цепь М40 1-126-1</text>
<text class="tx" x="439.4" y="255.2" font-size="4" text-anchor="start" textLength="50" lengthAdjust="spacingAndGlyphs">исполнение 1 ГОСТ 588-74</text>
<text class="lb" font-size="10.6" text-anchor="middle" transform="translate(462.4 214.6) scale(0.58 1)">Ж–Ж</text>
<path class="t" d="M98.7 340V418M182.3 370V403M223.4 381V411M642.5 360.5V418" />
<path class="t" d="M98.7 401.3L182.3 401.3"/>
<path class="ar" d="M182.3 401.3L177.7 402.15L177.7 400.45Z"/>
<path class="ar" d="M98.7 401.3L103.3 400.45L103.3 402.15Z"/>
<path class="t" d="M182.3 401.3L223.4 401.3"/>
<path class="ar" d="M223.4 401.3L218.8 402.15L218.8 400.45Z"/>
<path class="ar" d="M182.3 401.3L186.9 400.45L186.9 402.15Z"/>
<path class="t" d="M223.4 401.3L414.6 401.3"/>
<path class="ar" d="M414.6 401.3L410 402.15L410 400.45Z"/>
<path class="ar" d="M223.4 401.3L228 400.45L228 402.15Z"/>
<path class="t" d="M223.4 408.9L607.2 408.9"/>
<path class="ar" d="M607.2 408.9L602.6 409.75L602.6 408.05Z"/>
<path class="ar" d="M223.4 408.9L228 408.05L228 409.75Z"/>
<path class="t" d="M98.7 416.6L642.5 416.6"/>
<path class="ar" d="M642.5 416.6L637.9 417.45L637.9 415.75Z"/>
<path class="ar" d="M98.7 416.6L103.3 415.75L103.3 417.45Z"/>
<text class="tx" x="140" y="400" font-size="3.4" text-anchor="middle" >110</text>
<text class="tx" x="203" y="400" font-size="3.4" text-anchor="middle" >62</text>
<text class="tx" x="310" y="400" font-size="3.4" text-anchor="middle" >260</text>
<text class="tx" x="414" y="407.6" font-size="3.4" text-anchor="middle" textLength="13">600±0.4</text>
<text class="tx" x="366" y="415.4" font-size="3.4" text-anchor="middle" >709</text>
</g>
<g id="viewA">
<path class="t" d="M192.41 431.88L181.89 422.18A122.2 122.2 0 0 0 110.75 456.44L111.78 470.7" />
<path class="t" d="M106.68 477.1L92.54 479.27A122.2 122.2 0 0 0 74.97 556.26L86.76 564.35" />
<path class="t" d="M281.22 470.7L282.25 456.44A122.2 122.2 0 0 0 211.11 422.18L200.59 431.88" />
<path class="t" d="M306.24 564.35L318.03 556.26A122.2 122.2 0 0 0 300.46 479.27L286.32 477.1" />
<path class="t" d="M307.22 558.27A111.7 111.7 0 1 0 85.78 558.27" />
<path class="t" d="M304.63 559.47A109.3 109.3 0 1 0 88.37 559.47" />
<path class="t" d="M75.11 557.55Q81.11 558.55 85.11 562.55T94.37 563.47Q108.37 560.47 125 562.6" />
<path class="t" d="M317.89 557.55Q309.89 560.55 303.89 564.95Q293.89 560.55 283.89 561.55T267.5 560.7" />
<path class="t" d="M268.2 543.51A71.7 71.7 0 1 0 124.8 543.5" />
<path class="t" d="M124.8 543.5V593" />
<path class="t" d="M268.2 543.5V580.8" />
<path class="t" d="M124.8 543.5A71.7 71.7 0 0 0 210.18 613.88" />
<path class="t" d="M196.5 603.7A60.2 60.2 0 0 0 212.08 601.65" />
<path class="t" d="M196.5 483.3A60.2 60.2 0 0 0 196.5 603.7" />
<path class="k" d="M196.5 494.5A49 49 0 0 0 162.16 508.55" />
<circle class="m" cx="153.4" cy="500.7" r="9.2" />
<circle class="t" cx="153.4" cy="500.7" r="8.2" />
<circle class="m" cx="153.4" cy="500.7" r="6.6" />
<path class="t" d="M146 493.3L160.8 508.1"/>
<path class="t" d="M147.4 506.7L159.4 494.7"/>
<circle class="m" cx="153.4" cy="585" r="9.2" />
<circle class="t" cx="153.4" cy="585" r="8.2" />
<circle class="m" cx="153.4" cy="585" r="6.6" />
<path class="t" d="M146 577.6L160.8 592.4"/>
<path class="t" d="M147.4 591L159.4 579"/>
<path class="t" d="M136.4 483.3L169.8 517.2"/>
<path class="k" d="M145.8 476.2L137.6 483.6" />
<path class="ar" d="M137.2 484L140.79 479.02L142.53 480.95Z"/>
<path class="k" d="M176.9 507.3L169.2 515" />
<path class="ar" d="M168.8 515.4L172.12 510.24L173.96 512.08Z"/>
<text class="lb" font-size="9.6" text-anchor="middle" transform="translate(138.8 477) scale(0.66 1)">Г</text>
<text class="lb" font-size="9.6" text-anchor="middle" transform="translate(179.2 517) scale(0.66 1)">Г</text>
<text class="tx" x="169.4" y="499.4" font-size="3.3" text-anchor="middle" transform="rotate(-60 169.4 499.4)" >ø13</text>
<path class="t" d="M138.2 601.1L146.6 593.1"/>
<text class="lb" font-size="9.2" text-anchor="middle" transform="translate(187.4 458.8) scale(0.62 1)">Ж</text>
<path class="k" d="M184.2 460.6H196.5" />
<path class="ar" d="M196.5 460.6L190.9 461.75L190.9 459.45Z"/>
<text class="lb" font-size="9.2" text-anchor="middle" transform="translate(187.4 629.6) scale(0.62 1)">Ж</text>
<path class="k" d="M184.2 621H196.5" />
<path class="ar" d="M196.5 621L190.9 622.15L190.9 619.85Z"/>
<text class="lb" font-size="9.2" text-anchor="middle" transform="translate(230 466.6) scale(0.7 1)">В</text>
<path class="k" d="M233.8 465.4V474.6" />
<path class="ar" d="M233.8 475.2L232.7 470.2L234.9 470.2Z"/>
<text class="lb" font-size="10.4" text-anchor="middle" transform="translate(122.6 439) scale(0.66 1)">А</text>
<text class="lb" font-size="10.2" text-anchor="middle" transform="translate(283.4 442.2) scale(0.8 1)">И–И</text>
<clipPath id="c28"><path d="M206.44 484.13A60.2 60.2 0 0 1 226 491.4Q229 488.6 235 489.2Q246 490.6 248.8 499Q250 506 245.4 510.6Q244.6 512.2 246.2 514A60.2 60.2 0 0 1 250.6 561Q246 571 247 577Q249 584.6 257 590L264.5 592.4V618.1H257.5V608Q257 603.6 252 601.2Q244 598.8 237 597.4Q232.6 595.4 230.4 593.4A60.2 60.2 0 0 1 212.49 601.54L211.49 589.63A48.5 48.5 0 0 0 204.92 495.74Z"/></clipPath><path d="M206.44 484.13A60.2 60.2 0 0 1 226 491.4Q229 488.6 235 489.2Q246 490.6 248.8 499Q250 506 245.4 510.6Q244.6 512.2 246.2 514A60.2 60.2 0 0 1 250.6 561Q246 571 247 577Q249 584.6 257 590L264.5 592.4V618.1H257.5V608Q257 603.6 252 601.2Q244 598.8 237 597.4Q232.6 595.4 230.4 593.4A60.2 60.2 0 0 1 212.49 601.54L211.49 589.63A48.5 48.5 0 0 0 204.92 495.74Z" fill="#fff"/><use href="#L2" clip-path="url(#c28)"/><path class="k" d="M206.44 484.13A60.2 60.2 0 0 1 226 491.4Q229 488.6 235 489.2Q246 490.6 248.8 499Q250 506 245.4 510.6Q244.6 512.2 246.2 514A60.2 60.2 0 0 1 250.6 561Q246 571 247 577Q249 584.6 257 590L264.5 592.4V618.1H257.5V608Q257 603.6 252 601.2Q244 598.8 237 597.4Q232.6 595.4 230.4 593.4A60.2 60.2 0 0 1 212.49 601.54L211.49 589.63A48.5 48.5 0 0 0 204.92 495.74Z"/>
<clipPath id="c29"><path d="M203.25 495.47A48.5 48.5 0 0 1 209.05 590.35L206.85 582.14A40 40 0 0 0 202.07 503.89Z"/></clipPath><path d="M203.25 495.47A48.5 48.5 0 0 1 209.05 590.35L206.85 582.14A40 40 0 0 0 202.07 503.89Z" fill="#fff"/><use href="#L1m" clip-path="url(#c29)"/><path class="m" d="M203.25 495.47A48.5 48.5 0 0 1 209.05 590.35L206.85 582.14A40 40 0 0 0 202.07 503.89Z"/>
<path class="m" d="M202.07 503.89A40 40 0 0 1 206.85 582.14L204.5 573.35A30.9 30.9 0 0 0 200.8 512.9Z" style="fill:#fff"/>
<path class="t" d="M205.74 577.98A35.7 35.7 0 0 0 201.47 508.15" />
<path class="t" d="M206.34 580.21A38 38 0 0 0 201.79 505.87" />
<clipPath id="c30"><path d="M200.8 512.9A30.9 30.9 0 0 1 204.5 573.35L202.27 565.04A22.3 22.3 0 0 0 199.6 521.42Z"/></clipPath><path d="M200.8 512.9A30.9 30.9 0 0 1 204.5 573.35L202.27 565.04A22.3 22.3 0 0 0 199.6 521.42Z" fill="#fff"/><use href="#L2m" clip-path="url(#c30)"/><path class="m" d="M200.8 512.9A30.9 30.9 0 0 1 204.5 573.35L202.27 565.04A22.3 22.3 0 0 0 199.6 521.42Z"/>
<path class="" d="M196.9 468L210.2 474.1C207 478 206 482 206.6 484.5C207 490 208 500 211 513.8C214 522 212 530 207 537C204 541 204 545 204 548C203 556 203.5 562 205 568C207 576 211 586 213.3 599.3L212.4 603H196.9Z" fill="#fff" stroke="none"/>
<path class="t" d="M210.2 474.1C207 478 206 482 206.6 484.5C207 490 208 500 211 513.8C214 522 212 530 207 537C204 541 204 545 204 548C203 556 203.5 562 205 568C207 576 211 586 213.3 599.3Q212.4 606 210.2 618.4" />
<path class="t" d="M196.5 483.3A60.2 60.2 0 0 1 206.44 484.13" />
<path class="t" d="M208.95 472.89A71.7 71.7 0 0 1 268.2 543.5" />
<circle class="w" cx="221.6" cy="519.4" r="2.6" />
<circle class="g" cx="238" cy="501" r="4.7" />
<circle class="g" cx="238" cy="585.4" r="4.7" />
<path class="t" d="M196.5 428L196.5 624"/>
<path class="t" d="M73.7 543.5L323.6 543.5"/>
<path class="t" d="M196.5 543.5L128.5 563"/>
<path class="ar" d="M128.5 563L133.03 560.66L133.58 562.58Z"/>
<path class="t" d="M196.5 543.5L147.3 576.3"/>
<path class="ar" d="M147.3 576.3L150.91 572.69L152.01 574.36Z"/>
<path class="t" d="M196.5 543.5L170.1 585.4"/>
<path class="ar" d="M170.1 585.4L171.92 580.64L173.61 581.7Z"/>
<path class="t" d="M196.5 543.5L222.4 501.6"/>
<path class="ar" d="M222.4 501.6L220.62 506.38L218.92 505.33Z"/>
<path class="t" d="M196.5 543.5L245.4 510.1"/>
<path class="ar" d="M245.4 510.1L241.84 513.75L240.71 512.09Z"/>
<path class="t" d="M196.5 543.5L263.4 523.4"/>
<path class="ar" d="M263.4 523.4L258.9 525.8L258.32 523.88Z"/>
<text class="tx" x="159" y="552" font-size="3.4" text-anchor="middle" transform="rotate(-16 159 552)" >ø185</text>
<text class="tx" x="165.6" y="563.6" font-size="3.4" text-anchor="middle" transform="rotate(-33 165.6 563.6)" >ø155</text>
<text class="tx" x="178.6" y="570.4" font-size="3.4" text-anchor="middle" transform="rotate(-58 178.6 570.4)" >ø110</text>
<path class="m" d="M146.6 592.6H99Q95.9 592.6 95.9 595.8V618.6H292.5" />
<path class="t" d="M115.5 590.3V620.4" />
<path class="m" d="M146.6 592.6V618.6" />
<clipPath id="c31"><path d="M289.4 592.2H293.6L295.5 594.1V618.1H289.4Z"/></clipPath><path d="M289.4 592.2H293.6L295.5 594.1V618.1H289.4Z" fill="#fff"/><use href="#L2" clip-path="url(#c31)"/><path class="k" d="M289.4 592.2H293.6L295.5 594.1V618.1H289.4Z"/>
<clipPath id="c32"><path d="M264.5 592.2H270.1V599.2H266.6Q264.5 599.2 264.5 601.2Z"/></clipPath><path d="M264.5 592.2H270.1V599.2H266.6Q264.5 599.2 264.5 601.2Z" fill="#fff"/><use href="#L2" clip-path="url(#c32)"/><path class="k" d="M264.5 592.2H270.1V599.2H266.6Q264.5 599.2 264.5 601.2Z"/>
<clipPath id="c33"><path d="M289.4 592.2H282.4V599.2H287.3Q289.4 599.2 289.4 601.2Z"/></clipPath><path d="M289.4 592.2H282.4V599.2H287.3Q289.4 599.2 289.4 601.2Z" fill="#fff"/><use href="#L2" clip-path="url(#c33)"/><path class="k" d="M289.4 592.2H282.4V599.2H287.3Q289.4 599.2 289.4 601.2Z"/>
<path class="k" d="M264.5 618.1V601.4Q264.5 599.2 266.7 599.2H287.2Q289.4 599.2 289.4 601.4V618.1" />
<path class="k" d="M270.1 592.2V607H282.4V592.2" />
<path class="k" d="M258.7 592.2H295.5" />
<rect class="m" x="264.5" y="580.8" width="24.9" height="11.4" />
<path class="t" d="M276.3 588L276.3 622"/>
<path class="t" d="M264.5 579.6L289.4 579.6"/>
<path class="ar" d="M289.4 579.6L284.8 580.45L284.8 578.75Z"/>
<path class="ar" d="M264.5 579.6L269.1 578.75L269.1 580.45Z"/>
<text class="tx" x="277" y="578.2" font-size="3.4" text-anchor="middle" >ø32</text>
<path class="t" d="M270.1 606L282.4 606"/>
<path class="ar" d="M282.4 606L277.8 606.85L277.8 605.15Z"/>
<path class="ar" d="M270.1 606L274.7 605.15L274.7 606.85Z"/>
<text class="tx" x="276.3" y="604.6" font-size="3.4" text-anchor="middle" >ø17</text>
<text class="tx" x="276.3" y="611.8" font-size="3.4" text-anchor="middle" >4 отв</text>
<path class="t" d="M295.5 592.2H310M292.5 618.1H325" />
<path class="t" d="M307.2 592.2L307.2 618.1"/>
<path class="ar" d="M307.2 618.1L306.35 613.5L308.05 613.5Z"/>
<path class="ar" d="M307.2 592.2L308.05 596.8L306.35 596.8Z"/>
<path class="t" d="M321.8 543.5L321.8 618.1"/>
<path class="ar" d="M321.8 618.1L320.95 613.5L322.65 613.5Z"/>
<path class="ar" d="M321.8 543.5L322.65 548.1L320.95 548.1Z"/>
<text class="tx" x="304.6" y="605" font-size="3.4" text-anchor="middle" transform="rotate(-90 304.6 605)" >36</text>
<text class="tx" x="319.4" y="585" font-size="3.4" text-anchor="middle" transform="rotate(-90 319.4 585)" textLength="16" lengthAdjust="spacingAndGlyphs">95±0.05</text>
<path class="t" d="M119.8 618.6V633M271.5 618.1V633" />
<path class="t" d="M119.8 631.3L271.5 631.3"/>
<path class="ar" d="M271.5 631.3L266.9 632.15L266.9 630.45Z"/>
<path class="ar" d="M119.8 631.3L124.4 630.45L124.4 632.15Z"/>
<text class="tx" x="204.6" y="629.8" font-size="3.4" text-anchor="middle" >196</text>
</g>
<g id="misc">
<text class="lb" font-size="11" text-anchor="middle" transform="translate(403.6 447.2) scale(0.74 1)">Г–Г</text>
<clipPath id="c34"><path d="M374 464H430.6L433.6 467V471.1H370.9V467Z"/></clipPath><path d="M374 464H430.6L433.6 467V471.1H370.9V467Z" fill="#fff"/><use href="#L2" clip-path="url(#c34)"/><path class="k" d="M374 464H430.6L433.6 467V471.1H370.9V467Z"/>
<clipPath id="c35"><path d="M370.9 480.2H433.6V484.9H370.9Z"/></clipPath><path d="M370.9 480.2H433.6V484.9H370.9Z" fill="#fff"/><use href="#L2" clip-path="url(#c35)"/><path class="k" d="M370.9 480.2H433.6V484.9H370.9Z"/>
<clipPath id="c36"><path d="M371.4 484.9H386.6V490.2Q383 493 378 492.4T371.4 491.6Z"/></clipPath><path d="M371.4 484.9H386.6V490.2Q383 493 378 492.4T371.4 491.6Z" fill="#fff"/><use href="#L1f" clip-path="url(#c36)"/><path class="k" d="M371.4 484.9H386.6V490.2Q383 493 378 492.4T371.4 491.6Z"/>
<clipPath id="c37"><path d="M390.4 484.9H402.7V491.6Q398 490 390.4 490.6Z"/></clipPath><path d="M390.4 484.9H402.7V491.6Q398 490 390.4 490.6Z" fill="#fff"/><use href="#L1" clip-path="url(#c37)"/><path class="k" d="M390.4 484.9H402.7V491.6Q398 490 390.4 490.6Z"/>
<clipPath id="c38"><path d="M402.7 484.9H418.9V490.4Q412 493.4 402.7 491.6Z"/></clipPath><path d="M402.7 484.9H418.9V490.4Q412 493.4 402.7 491.6Z" fill="#fff"/><use href="#L1" clip-path="url(#c38)"/><path class="k" d="M402.7 484.9H418.9V490.4Q412 493.4 402.7 491.6Z"/>
<clipPath id="c39"><path d="M418.9 484.9H433.6V491.8Q426 493.4 418.9 490.4Z"/></clipPath><path d="M418.9 484.9H433.6V491.8Q426 493.4 418.9 490.4Z" fill="#fff"/><use href="#L2f" clip-path="url(#c39)"/><path class="k" d="M418.9 484.9H433.6V491.8Q426 493.4 418.9 490.4Z"/>
<path class="m" d="M386.6 484.9V490.2M390.4 484.9V490.6" />
<rect class="w" x="372.3" y="471.1" width="59.4" height="9.1" />
<path class="k" d="M422.7 471.1V480.2" />
<rect class="w" x="367.1" y="467.3" width="5.2" height="16.2" />
<path class="t" d="M367.1 472.6L372.3 472.6"/>
<path class="t" d="M367.1 478.4L372.3 478.4"/>
<rect class="w" x="431.7" y="467.3" width="2.3" height="16.2" />
<rect class="w" x="434" y="467.3" width="8.1" height="16.2" />
<path class="t" d="M434 472.6L442.1 472.6"/>
<path class="t" d="M434 478.4L442.1 478.4"/>
<path class="k" d="M442.1 472H445L446.4 473.4V477.8L445 479.2H442.1" />
<path class="t" d="M374 464L377.6 471.1M377.6 464L372 471.1M430.6 464L427.5 471.1M427.5 464L432.6 471.1M372 480.2L377.6 484.9M432.6 480.2L427.5 484.9" />
<path class="c" d="M364.7 475.5L448.3 475.5"/>
<path class="t" d="M448 492.9H463.4" />
<path class="k" d="M463.4 492.9L479.2 466.4" />
<text class="tx" x="455.4" y="491.2" font-size="4" text-anchor="middle" >ø10</text>
<text class="tx" x="455.4" y="498" font-size="4" text-anchor="middle" >2 отв</text>
<text class="lb" font-size="10.4" text-anchor="middle" transform="translate(398 528.4) scale(0.6 1)">Е–Е</text>
<clipPath id="c40"><path d="M360.7 574.4a38.8 38.8 0 1 0 77.6 0a38.8 38.8 0 1 0 -77.6 0Z"/></clipPath><path d="M360.7 574.4a38.8 38.8 0 1 0 77.6 0a38.8 38.8 0 1 0 -77.6 0Z" fill="#fff"/><use href="#L2w" clip-path="url(#c40)"/><path class="k" d="M360.7 574.4a38.8 38.8 0 1 0 77.6 0a38.8 38.8 0 1 0 -77.6 0Z"/>
<clipPath id="c41"><path d="M372.9 574.4a26.6 26.6 0 1 0 53.2 0a26.6 26.6 0 1 0 -53.2 0Z"/></clipPath><path d="M372.9 574.4a26.6 26.6 0 1 0 53.2 0a26.6 26.6 0 1 0 -53.2 0Z" fill="#fff"/><use href="#L1ff" clip-path="url(#c41)"/><path class="k" d="M372.9 574.4a26.6 26.6 0 1 0 53.2 0a26.6 26.6 0 1 0 -53.2 0Z"/>
<rect class="g" x="420.2" y="566.4" width="9.6" height="15.9" style="fill:#707070"/>
<path class="t" d="M358.5 574.4L440 574.4"/>
<path class="t" d="M399.5 533.8L399.5 615"/>
<path class="t" d="M429.8 566.4H452M429.8 582.3H452M450 564V608" />
<path class="ar" d="M450 566.4L449.2 562.2L450.8 562.2Z"/>
<path class="ar" d="M450 582.3L450.8 586.5L449.2 586.5Z"/>
<text class="tx" x="448.4" y="596" font-size="3.4" text-anchor="middle" transform="rotate(-90 448.4 596)" textLength="19" lengthAdjust="spacingAndGlyphs">20 P9/h9</text>
<path class="t" d="M372.1 574.4V631.8M429.8 582.3V631.8" />
<path class="t" d="M372.1 621.9L429.8 621.9"/>
<path class="ar" d="M429.8 621.9L425.2 622.75L425.2 621.05Z"/>
<path class="ar" d="M372.1 621.9L376.7 621.05L376.7 622.75Z"/>
<path class="t" d="M372.1 629.8L429.8 629.8"/>
<path class="ar" d="M429.8 629.8L425.2 630.65L425.2 628.95Z"/>
<path class="ar" d="M372.1 629.8L376.7 628.95L376.7 630.65Z"/>
<text class="tx" x="400" y="620.6" font-size="3.4" text-anchor="middle" textLength="14">74.5-0.2</text>
<text class="tx" x="400" y="628.6" font-size="3.4" text-anchor="middle" >74.9</text>
<path d="M492.8 570V568.8H498V570M493.7 568.8Q494.5 565.2 495.65 561.6H497.89L497 568.8" fill="none" stroke="#34363c" stroke-width="0.85"/>
<path class="k" d="M499.6 565.6L502.6 565.6"/>
<path d="M503.4 570V568.8H508.6V570M504.3 568.8Q505.1 565.2 506.25 561.6H508.49L507.6 568.8" fill="none" stroke="#34363c" stroke-width="0.85"/>
<clipPath id="c42"><path d="M480.4 598.3a19.4 19.4 0 1 0 38.8 0a19.4 19.4 0 1 0 -38.8 0Z"/></clipPath><path d="M480.4 598.3a19.4 19.4 0 1 0 38.8 0a19.4 19.4 0 1 0 -38.8 0Z" fill="#fff"/><use href="#L1f" clip-path="url(#c42)"/><path class="k" d="M480.4 598.3a19.4 19.4 0 1 0 38.8 0a19.4 19.4 0 1 0 -38.8 0Z"/>
<rect class="g" x="514.6" y="593.2" width="6.9" height="11" style="fill:#707070"/>
<path class="t" d="M478.5 598.3L522.4 598.3"/>
<path class="t" d="M499.8 577.4L499.8 618.6"/>
<path class="t" d="M472 579.1H499.8M472 617.7H499.8" />
<path class="t" d="M474.4 579.1L474.4 617.7"/>
<path class="ar" d="M474.4 617.7L473.55 613.1L475.25 613.1Z"/>
<path class="ar" d="M474.4 579.1L475.25 583.7L473.55 583.7Z"/>
<text class="tx" x="472.4" y="598.6" font-size="3.4" text-anchor="middle" transform="rotate(-90 472.4 598.6)" textLength="14">ø50 k6</text>
<path class="t" d="M514.6 577.6V593.2M521.5 577.6V593.2M508.7 579.1H525.8" />
<path class="ar" d="M514.6 579.1L510.6 579.9L510.6 578.3Z"/>
<path class="ar" d="M521.5 579.1L525.5 578.3L525.5 579.9Z"/>
<text class="tx" x="518" y="577.6" font-size="3.4" text-anchor="middle" >9</text>
<path class="t" d="M521.5 593.2H535.4M521.5 604.2H535.4M533.8 568.5V606" />
<path class="ar" d="M533.8 593.2L533 589.2L534.6 589.2Z"/>
<path class="ar" d="M533.8 604.2L534.6 608.2L533 608.2Z"/>
<text class="tx" x="531.6" y="580" font-size="3.4" text-anchor="middle" transform="rotate(-90 531.6 580)" textLength="18" lengthAdjust="spacingAndGlyphs">14 P9/h9</text>
<path class="t" d="M480.4 598.3V629.4M521.5 604.2V629.4" />
<path class="t" d="M480.4 627.5L521.5 627.5"/>
<path class="ar" d="M521.5 627.5L516.9 628.35L516.9 626.65Z"/>
<path class="ar" d="M480.4 627.5L485 626.65L485 628.35Z"/>
<text class="tx" x="500.6" y="626" font-size="3.4" text-anchor="middle" textLength="12">54-0.2</text>
<text class="lb" font-size="11.6" text-anchor="middle" transform="translate(521.6 439.4) scale(0.62 1)">Б</text>
<text class="lb" font-size="11.6" text-anchor="middle" transform="translate(608.8 440.4) scale(0.62 1)">В</text>
<path class="m" d="M495.1 467.4H469.9Q466.9 467.4 466.9 470.4V512.4Q466.9 515.4 469.9 515.4H495.1" />
<path class="m" d="M638.4 467.4H664.2Q667.2 467.4 667.2 470.4V512.4Q667.2 515.4 664.2 515.4H638.4" />
<path class="m" d="M482 474H493.6Q498.6 474 498.6 479V504Q498.6 509 493.6 509H478.5Q473.5 509 473.5 504V484Q473.5 480 476.5 478.4Z" />
<path class="t" d="M491.6 467.4V474M491.6 509V515.4" />
<circle class="m" cx="486.3" cy="491.3" r="6.9" />
<circle class="t" cx="474.8" cy="473" r="3.4" />
<path class="t" d="M471.4 476.4L478.2 469.6M471.4 469.6L478.2 476.4" />
<path class="k" d="M496.6 461.2H566.6M496.6 461.2Q494.8 461.2 494.8 463V465.8M494.8 465.8H567M494.8 516.8H567M494.8 516.8V519.8Q494.8 521.6 496.6 521.6H566.6" style="stroke-width:1.5"/>
<path class="m" d="M495.1 467.4H566M495.1 515.4H566" />
<path class="k" d="M572 461.2H636.6Q638.4 461.2 638.4 463V465.8M571 465.8H638.4M571 516.8H638.4M572.6 521.6H636.6Q638.4 521.6 638.4 519.8V516.8" style="stroke-width:1.5"/>
<rect class="w" x="517.4" y="455.9" width="14.8" height="5.3" />
<path class="t" d="M521.8 455.9L521.8 461.2"/>
<path class="t" d="M527.8 455.9L527.8 461.2"/>
<rect class="w" x="518.4" y="521.6" width="12.8" height="8.4" />
<path class="t" d="M522.4 521.6L522.4 530"/>
<path class="t" d="M527.2 521.6L527.2 530"/>
<rect class="w" x="520.8" y="530" width="8" height="4" />
<path class="t" d="M525 453.8L525 537.8"/>
<path class="m" d="M510.4 474H539.4L545.6 478.1H567M510.4 508.4H539.4L545.6 504.4H567M510.4 474Q505.4 474 505.4 479V503.4Q505.4 508.4 510.4 508.4M539.4 474V508.4" />
<path class="m" d="M532.2 467.4L541.5 470.9H567M532.2 515.4L541.5 511.8H567" />
<path class="t" d="M566.6 446.6Q569 452 567.4 458T567.6 470T567.2 482T568.4 494T567 506T568 518T567 530" />
<path class="t" d="M571.6 447.6Q573.6 452 572 458T572.4 470T571.8 482T573 494T571.6 506T572.6 518T571.8 526" />
<path class="k" d="M571.6 447.8Q577 445.6 583 447.6T595.1 447.4V460.4" />
<path class="k" d="M540 521.6V529.4Q546 527.6 552 529.4T567 529.6" />
<path class="m" d="M572 478.1H627M572 504.3H627M597.8 478.1V504.3M620.5 478.1V504.3" />
<path class="m" d="M638.4 465.4V476.5Q629 478.6 627.4 484Q626 491.3 627.4 498.6Q629 504 638.4 506V516.6" />
<rect class="w" x="602.4" y="449.3" width="14" height="11.1" />
<path class="t" d="M606.6 449.3L606.6 460.4"/>
<path class="t" d="M612.4 449.3L612.4 460.4"/>
<rect class="w" x="602.4" y="521.8" width="14" height="5.1" />
<path class="t" d="M609.6 444.6L609.6 529"/>
<circle class="m" cx="647.6" cy="491.3" r="14" />
<circle class="m" cx="647.6" cy="491.3" r="6.8" />
<circle class="t" cx="647.6" cy="491.3" r="8.4" />
<circle class="m" cx="660" cy="474.4" r="4.2" />
<path class="t" d="M655 474.4H665M660 469.4V479.4" />
<path class="t" d="M461 491.3L672 491.3"/>
<path class="t" d="M473.5 443.4V472M659 443.4V472" />
<path class="t" d="M473.5 444.6L659 444.6"/>
<path class="ar" d="M659 444.6L654.4 445.45L654.4 443.75Z"/>
<path class="ar" d="M473.5 444.6L478.1 443.75L478.1 445.45Z"/>
<text class="tx" x="566" y="443.2" font-size="3.4" text-anchor="middle" >242</text>
<path class="t" d="M486.3 491.3V540.4M647.6 491.3V540.4" />
<path class="t" d="M486.3 538.7L647.6 538.7"/>
<path class="ar" d="M647.6 538.7L643 539.55L643 537.85Z"/>
<path class="ar" d="M486.3 538.7L490.9 537.85L490.9 539.55Z"/>
<text class="tx" x="586.6" y="537.4" font-size="3.4" text-anchor="middle" textLength="13">210±0.4</text>
<path class="t" d="M466.9 515V550.4M667.2 515V550.4" />
<path class="t" d="M466.9 548.5L667.2 548.5"/>
<path class="ar" d="M667.2 548.5L662.6 549.35L662.6 547.65Z"/>
<path class="ar" d="M466.9 548.5L471.5 547.65L471.5 549.35Z"/>
<text class="tx" x="563" y="547.2" font-size="3.4" text-anchor="middle" >260</text>
<path class="t" d="M667 467.4H677M667 515.4H677" />
<path class="t" d="M675 467.4L675 515.4"/>
<path class="ar" d="M675 515.4L674.15 510.8L675.85 510.8Z"/>
<path class="ar" d="M675 467.4L675.85 472L674.15 472Z"/>
<text class="tx" x="673" y="491.6" font-size="3.4" text-anchor="middle" transform="rotate(-90 673 491.6)" >62</text>
</g>
</svg>
<!--DRAW-END-->
</body>
</html>
